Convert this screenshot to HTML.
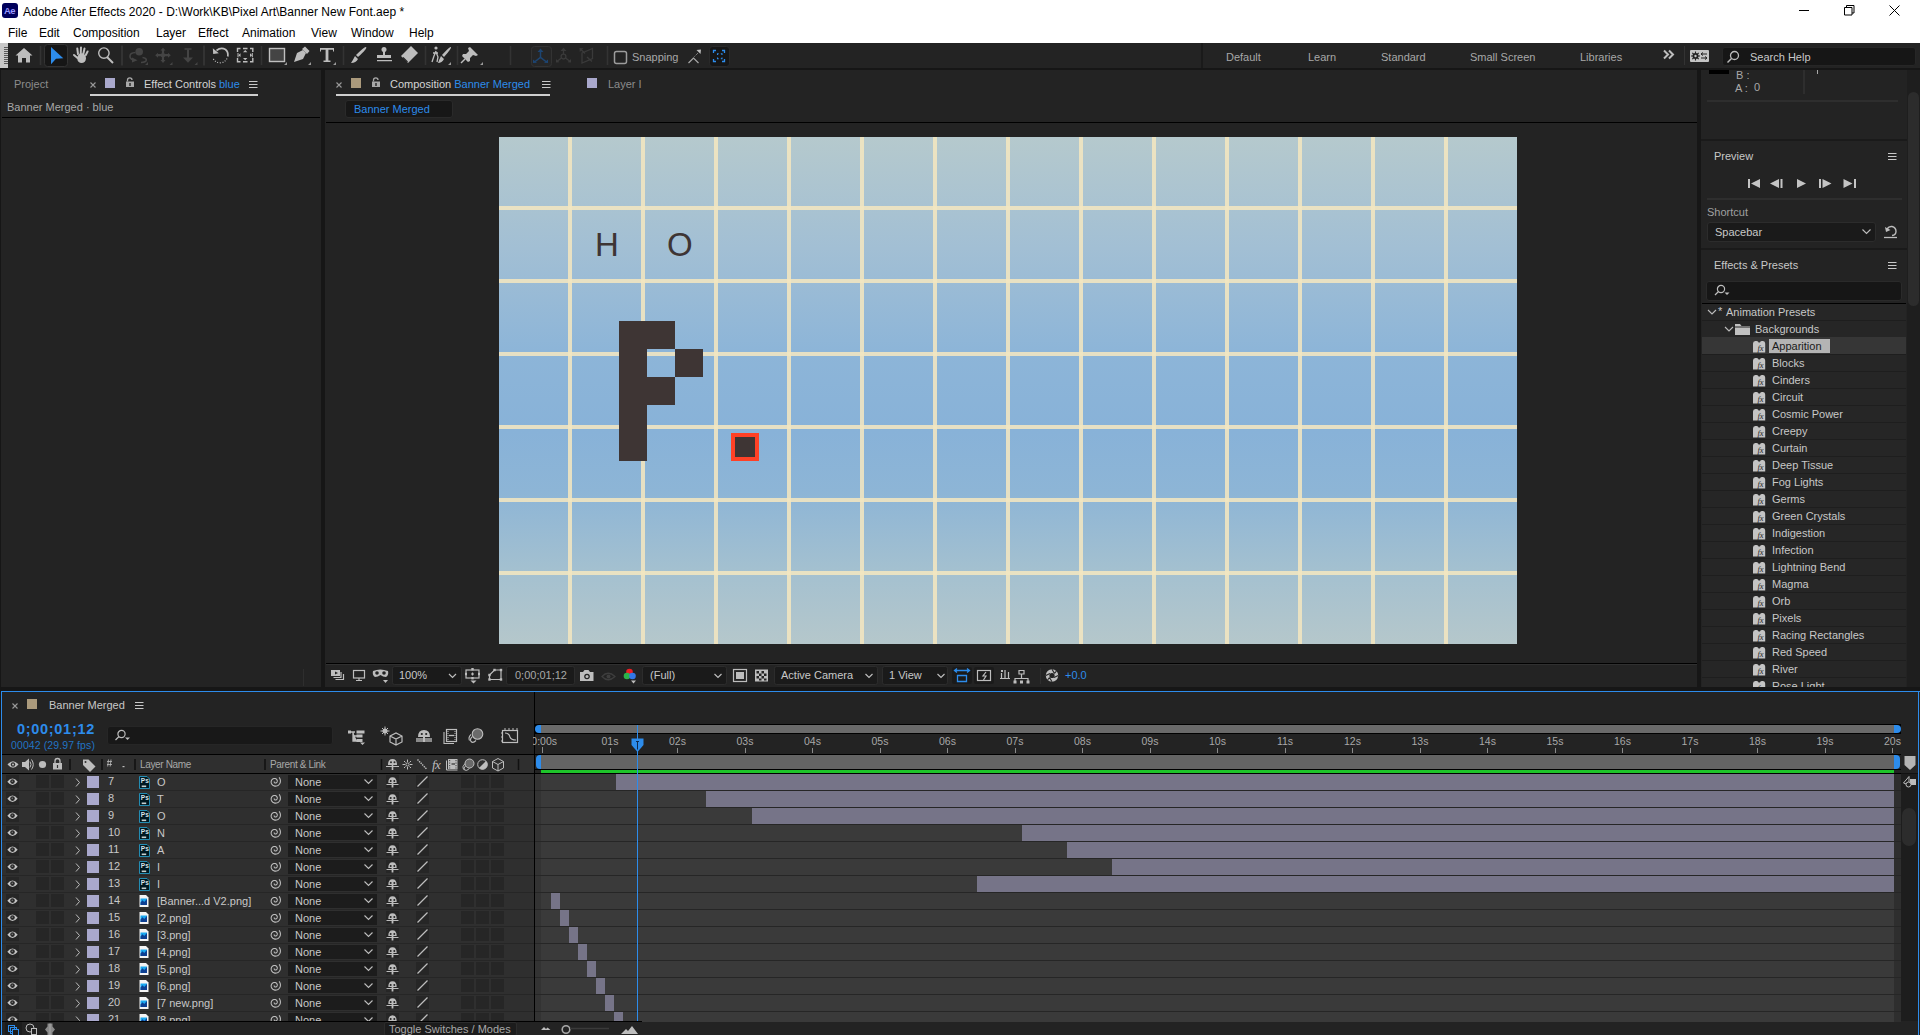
<!DOCTYPE html>
<html><head><meta charset="utf-8">
<style>
*{margin:0;padding:0;box-sizing:border-box}
html,body{width:1920px;height:1035px;overflow:hidden;background:#161616;font-family:"Liberation Sans",sans-serif;position:relative}
.a{position:absolute}
.t{position:absolute;white-space:nowrap;font-size:11px;line-height:14px}
.w{font-size:12px;color:#000}
.pn{position:absolute;background:#232323}
</style></head><body>
<!-- title + menu -->
<div class="a" style="left:0;top:0;width:1920px;height:43px;background:#fff"></div>
<div class="a" style="left:2px;top:3px;width:16px;height:15px;background:#00005b;border-radius:3px"></div>
<div class="t" style="left:4px;top:4px;font-size:9.5px;font-weight:bold;color:#9999ff;letter-spacing:-0.6px">Ae</div>
<div class="t w" style="left:23px;top:5px">Adobe After Effects 2020 - D:\Work\KB\Pixel Art\Banner New Font.aep *</div>
<div class="t w" style="left:8px;top:26px">File</div>
<div class="t w" style="left:39px;top:26px">Edit</div>
<div class="t w" style="left:73px;top:26px">Composition</div>
<div class="t w" style="left:156px;top:26px">Layer</div>
<div class="t w" style="left:198px;top:26px">Effect</div>
<div class="t w" style="left:242px;top:26px">Animation</div>
<div class="t w" style="left:311px;top:26px">View</div>
<div class="t w" style="left:351px;top:26px">Window</div>
<div class="t w" style="left:409px;top:26px">Help</div>

<!-- toolbar -->
<div class="a" style="left:0;top:43px;width:1920px;height:25px;background:#232323"></div>
<div class="a" style="left:0;top:68px;width:1920px;height:2px;background:#161616"></div>
<div class="a" style="left:0;top:43px;width:8px;height:25px;background:#c8c8c8"></div>
<svg class="a" style="left:4px;top:45px" width="4" height="21"><g stroke="#5a5a5a" stroke-width="1"><path d="M0 2.5h4M0 4.5h4M0 6.5h4M0 8.5h4M0 10.5h4M0 12.5h4M0 14.5h4M0 16.5h4M0 18.5h4"/></g></svg>
<svg class="a" style="left:0;top:43px" width="740" height="25" fill="none">
 <g fill="#bdbdbd">
  <path d="M24 5 L32.5 12.5 L30 12.5 L30 19.5 L26 19.5 L26 15 L22 15 L22 19.5 L18 19.5 L18 12.5 L15.5 12.5 Z"/>
 </g>
 <g stroke="#333" stroke-width="1.6"><path d="M40.5 3v19M261.5 3v19M343.5 3v19M425.5 3v19M457.5 3v19M510.5 3v19M607.5 3v19M1202.5 3v19M1684.5 3v19"/></g>
 <rect x="44.5" y="1.5" width="23" height="22" rx="3" fill="#161616" stroke="#333"/>
 <path d="M51 4 L63.3 15.3 L56 15.8 L51 21.3 Z" fill="#2d8ceb"/>
 <!-- hand -->
 <g stroke="#bdbdbd" stroke-width="2" stroke-linecap="round"><path d="M78 11 L77.3 5.5 M80.7 11 L81 4.5 M83.3 11 L84.5 5.5 M85.8 12 L87.6 8.5 M74 12 L77.5 15"/></g><ellipse cx="81.6" cy="15.2" rx="4.4" ry="4.9" fill="#bdbdbd"/>
 <!-- zoom -->
 <circle cx="103.9" cy="10.1" r="5.2" stroke="#bdbdbd" stroke-width="1.4"/>
 <path d="M107 14 L113 20" stroke="#bdbdbd" stroke-width="2"/>
 <!-- dim 3d tools -->
 <g fill="#444" stroke="#444">
  <circle cx="139.2" cy="8.8" r="3.8" stroke="none"/>
  <path d="M135.5 9.5 Q129.5 9.8 130 13.8 Q130.6 16.6 134.5 17" fill="none" stroke-width="1.6"/>
  <path d="M132 14.5 L137.5 17.3 L132 19.5z" stroke="none"/>
  <path d="M142.5 14.5 Q146.5 15 146.3 17.2 Q146 19.3 141 19.5" fill="none" stroke-width="1.6"/>
  <path d="M163 6.5 V18.5 M157 12.2 H169" fill="none" stroke-width="2.2"/>
  <path d="M160.5 7.5 L163 4.8 L165.5 7.5z M160.5 17 L163 20 L165.5 17z M158 9.7 L155.2 12.2 L158 14.7z M168 9.7 L170.8 12.2 L168 14.7z" stroke="none"/>
  <circle cx="163" cy="12.2" r="2.2" stroke="none"/>
  <path d="M188 6.5 V15" fill="none" stroke-width="2"/>
  <path d="M184.5 6 H191.5" fill="none" stroke-width="1.5"/>
  <path d="M183 14.5 H193 L188 19.8z" stroke="none"/>
 </g>
 <g fill="#444"><path d="M148 22h-3l3-3z M172.5 22h-3l3-3z M197.5 22h-3l3-3z"/></g>
 <g stroke="#333" stroke-width="2"><path d="M122 2.5v20M204 2.5v20"/></g>
 <!-- rotate -->
 <path d="M216.5 7.5 Q221 3.8 225.5 6.5 Q228.5 8.8 227.8 13.5" stroke="#bdbdbd" stroke-width="1.7" fill="none"/>
 <path d="M212.8 5.2 L213.2 11 L218.8 10.3z" fill="#bdbdbd"/>
 <path d="M227 15.5 Q225 19.5 220.5 19.8 Q215.5 19.8 213.3 15.8" stroke="#bdbdbd" stroke-width="1.2" stroke-dasharray="1 1.6" fill="none"/>
 <!-- anchor -->
 <g stroke="#bdbdbd" stroke-width="1.4" fill="none"><path d="M237.5 9 V5.5 H240.5 M243 5.5 H247.5 M250 5.5 H252.8 V9 M252.8 15 V18.7 H250 M247.5 18.7 H243 M240.5 18.7 H237.5 V15"/></g>
 <path d="M243 9.3 L245.2 7 L247.4 9.3z M243 15 L245.2 17.3 L247.4 15z M240.5 10.3 L238.3 12.2 L240.5 14.1z M250 10.3 L252.2 12.2 L250 14.1z" fill="#bdbdbd"/>
 <path d="M238 10v4.3M252.3 10v4.3" stroke="#bdbdbd" stroke-width="1"/>
 <!-- rect -->
 <rect x="269.5" y="5.5" width="15" height="13" fill="#444" stroke="#c0c0c0" stroke-width="1.4"/>
 <g fill="#9a9a9a"><path d="M287 22h-3l3-3z M311 22h-3l3-3z M336 22h-3l3-3z M451 22h-3l3-3z M483 22h-3l3-3z"/></g>
 <!-- pen -->
 <path d="M294 19 L297 10 L303 7 L306 10 L303 16 Z" fill="#bdbdbd"/>
 <path d="M302 6 L305 3.5 L309.5 8 L307 11 Z" fill="#bdbdbd"/>
 <!-- T -->
 <path d="M320 5 H334 V8.5 H333 V6.8 H328.4 V17.5 H330.5 V19 H323.5 V17.5 H325.6 V6.8 H321 V8.5 H320 Z" fill="#bdbdbd"/>
 <!-- brush -->
 <path d="M366 4 Q368 5 358 14 L356 12 Q365 3 366 4 Z M355 13 L358 16 Q356 20 351 20 Q353 17 355 13 Z" fill="#bdbdbd"/>
 <!-- stamp -->
 <circle cx="384" cy="6.5" r="2.5" fill="#bdbdbd"/>
 <path d="M383 8 h2 v4 h6 v3 h-14 v-3 h6 Z M377 17 h15 v1.3 h-15 Z" fill="#bdbdbd"/>
 <!-- eraser -->
 <path d="M411 3 L418 10 L408 20 L401 13 Z" fill="#bdbdbd"/>
 <path d="M403 14.5 L407.5 19" stroke="#232323" stroke-width="1.3"/>
 <!-- roto -->
 <circle cx="436" cy="5" r="1.6" fill="#bdbdbd"/>
 <path d="M436 8 L434 13 L432 19 M436 9 L438 14 L437 19 M433 10 L438 10" stroke="#bdbdbd" stroke-width="1.3"/>
 <path d="M451 4 Q452 5 444 14 L442 12 Q450 3 451 4 Z M441 13 L444 16 Q442 20 438 20 Q439 17 441 13 Z" fill="#bdbdbd"/>
 <!-- pin -->
 <path d="M470 4 L478 12 L476 13 L473 12 L470 15 L470 18 L468 19 L462 13 L463 11 L466 11 L469 8 L468 5 Z" fill="#bdbdbd"/>
 <path d="M465 16 L461 20" stroke="#bdbdbd" stroke-width="1.5"/>
 <!-- 3d axes dim -->
 <rect x="531.5" y="3.5" width="20" height="20" rx="3" fill="#262626" stroke="#333"/>
 <g stroke="#1d4572" stroke-width="1.5" fill="none"><path d="M540.5 8 V14.4 L534.5 19 M540.5 14.4 L546.5 19"/></g>
 <g fill="#1d4572"><path d="M537.5 9 L540.5 5.5 L543.5 9z M533 16.5 L533 20 L537 19.8z M548 16.5 L548 20 L544 19.8z"/></g>
 <g stroke="#3a3a3a" stroke-width="1.3" fill="none"><circle cx="563.5" cy="13.6" r="2.4"/><path d="M563.5 7 V11.2 M561.4 15 L557 18.5 M565.6 15 L570 18.5"/>
 <path d="M582 10 L592.5 5.5 V15.5 L582 20z M580.5 6 L585 10.5 M587 14 L592 18.5"/></g>
 <g fill="#3a3a3a"><path d="M560.5 8 L563.5 4.8 L566.5 8z M556 16 L556 19.5 L559.5 19.3z M571 16 L571 19.5 L567.5 19.3z M579.5 5 L583.5 5.3 L579.8 9z"/></g>
 <!-- checkbox -->
 <rect x="614.5" y="8.5" width="12" height="12" rx="2" stroke="#9c9c9c" stroke-width="1.5"/>
 <!-- snap arrow -->
 <path d="M688.5 20 L693.5 15 L698.5 20" stroke="#a8a8a8" stroke-width="1.2"/>
 <path d="M694.5 13.5 L698 10" stroke="#a8a8a8" stroke-width="1" stroke-dasharray="1 1"/>
 <path d="M696.5 7 L701 6.5 L700.5 11z" fill="#bdbdbd"/>
 <!-- snap selected -->
 <rect x="709.5" y="3.5" width="20" height="20" rx="3" fill="#161616" stroke="#2a2a2a"/>
 <g stroke="#2d8ceb" stroke-width="1.3"><path d="M713.5 10 V7.5 H716 M722 7.5 H724.5 V10 M724.5 16 V18.5 H722 M716 18.5 H713.5 V16"/></g>
 <g stroke="#2d8ceb" stroke-width="1.1"><path d="M717.5 12 V10.8 H718.7 M720.8 10.8 H722 V12 M722 14.5 V15.7 H720.8 M718.7 15.7 H717.5 V14.5"/></g>
</svg>
<div class="t" style="left:632px;top:50px;color:#a8a8a8">Snapping</div>
<!-- workspaces -->
<div class="a" style="left:1201px;top:43px;width:2px;height:25px;background:#1a1a1a"></div>
<div class="a" style="left:1684px;top:46px;width:1px;height:19px;background:#333"></div>
<div class="t" style="left:1226px;top:50px;color:#a8a8a8">Default</div>
<div class="t" style="left:1308px;top:50px;color:#a8a8a8">Learn</div>
<div class="t" style="left:1381px;top:50px;color:#a8a8a8">Standard</div>
<div class="t" style="left:1470px;top:50px;color:#a8a8a8">Small Screen</div>
<div class="t" style="left:1580px;top:50px;color:#a8a8a8">Libraries</div>
<svg class="a" style="left:1660px;top:48px" width="20" height="14"><path d="M4 2.5 L8 6.5 L4 10.5 M9 2.5 L13 6.5 L9 10.5" stroke="#bdbdbd" stroke-width="2" fill="none"/></svg>
<svg class="a" style="left:1689px;top:50px" width="22" height="13"><rect x="1" y="0" width="19" height="12" rx="1" fill="#c4c4c4"/><circle cx="6.5" cy="6" r="3" fill="#232323"/><path d="M6.5 1.5v9M2 6h9M3.3 2.8l6.4 6.4M9.7 2.8l-6.4 6.4" stroke="#232323" stroke-width="1.1"/><circle cx="6.5" cy="6" r="1.2" fill="#c4c4c4"/><path d="M12 4h6M14 2.5l-2 1.5 2 1.5M12 8h6M16 6.5l2 1.5-2 1.5" stroke="#232323" stroke-width="1" fill="none"/></svg>
<div class="a" style="left:1722px;top:47px;width:194px;height:19px;background:#161616;border:1px solid #262626;border-radius:3px"></div>
<svg class="a" style="left:1726px;top:50px" width="14" height="14"><circle cx="8.5" cy="5.5" r="4" stroke="#bdbdbd" stroke-width="1.3" fill="none"/><path d="M5.5 8.5 L1.5 12.5" stroke="#bdbdbd" stroke-width="1.5"/></svg>
<div class="t" style="left:1750px;top:50px;color:#c8c8c8">Search Help</div>
<!-- window controls -->
<svg class="a" style="left:1790px;top:0" width="130" height="22" fill="none" stroke="#000" stroke-width="1"><path d="M9 10.5h10"/><path d="M54.5 7.5h7.5v7.5h-7.5z M56.5 7.5v-2h7.5v7.5h-2"/><path d="M99.5 5.5l10 10M109.5 5.5l-10 10"/></svg>



<!-- left panel -->
<div class="pn" style="left:1px;top:70px;width:320px;height:617px"></div>
<!-- comp panel -->
<div class="pn" style="left:325px;top:70px;width:1372px;height:617px"></div>
<!-- left panel content -->
<div class="t" style="left:14px;top:77px;color:#8c8c8c">Project</div>
<svg class="a" style="left:89px;top:81px" width="8" height="8"><path d="M1.5 1.5l5 5M6.5 1.5l-5 5" stroke="#9a9a9a" stroke-width="1.1"/></svg>
<div class="a" style="left:105px;top:78px;width:10px;height:10px;background:#a9a8cc"></div>
<svg class="a" style="left:125px;top:77px" width="10" height="11"><path d="M2.5 4.5 V3 Q2.5 0.8 4.8 0.8 Q7 0.8 7 3" stroke="#a8a8a8" stroke-width="1.3" fill="none"/><rect x="1" y="4.5" width="8" height="5.5" fill="#a8a8a8"/><rect x="4.3" y="6" width="1.4" height="3" fill="#232323"/></svg>
<div class="t" style="left:144px;top:77px;color:#d4d4d4">Effect Controls <span style="color:#2d8ceb">blue</span></div>
<svg class="a" style="left:249px;top:80px" width="9" height="9"><path d="M0 1.5h8.5M0 4.5h8.5M0 7.5h8.5" stroke="#c8c8c8" stroke-width="1.2"/></svg>
<div class="a" style="left:90px;top:94px;width:168px;height:2px;background:#cfcfcf"></div>
<div class="t" style="left:7px;top:100px;color:#a8a8a8">Banner Merged · blue</div>
<div class="a" style="left:2px;top:117px;width:318px;height:1px;background:#000"></div>
<div class="a" style="left:303px;top:669px;width:1px;height:17px;background:#2e2e2e"></div>

<!-- comp panel header -->
<svg class="a" style="left:335px;top:81px" width="8" height="8"><path d="M1.5 1.5l5 5M6.5 1.5l-5 5" stroke="#9a9a9a" stroke-width="1.1"/></svg>
<div class="a" style="left:351px;top:78px;width:10px;height:10px;background:#ab9a7c"></div>
<svg class="a" style="left:371px;top:77px" width="10" height="11"><path d="M2.5 4.5 V3 Q2.5 0.8 4.8 0.8 Q7 0.8 7 3" stroke="#a8a8a8" stroke-width="1.3" fill="none"/><rect x="1" y="4.5" width="8" height="5.5" fill="#a8a8a8"/><rect x="4.3" y="6" width="1.4" height="3" fill="#232323"/></svg>
<div class="t" style="left:390px;top:77px;color:#d4d4d4">Composition <span style="color:#2d8ceb">Banner Merged</span></div>
<svg class="a" style="left:542px;top:80px" width="9" height="9"><path d="M0 1.5h8.5M0 4.5h8.5M0 7.5h8.5" stroke="#c8c8c8" stroke-width="1.2"/></svg>
<div class="a" style="left:336px;top:94px;width:214px;height:2px;background:#cfcfcf"></div>
<div class="a" style="left:587px;top:78px;width:10px;height:10px;background:#a9a8cc"></div>
<div class="t" style="left:608px;top:77px;color:#8c8c8c">Layer I</div>
<div class="a" style="left:345px;top:100px;width:108px;height:18px;background:#171717;border:1px solid #2a2a2a;border-radius:3px"></div>
<div class="t" style="left:354px;top:102px;color:#2d8ceb">Banner Merged</div>
<div class="a" style="left:326px;top:122px;width:1371px;height:1px;background:#000"></div>

<!-- comp bottom toolbar -->
<div class="a" style="left:326px;top:663px;width:1371px;height:1px;background:#000"></div>
<div class="a" style="left:326px;top:664px;width:1371px;height:1px;background:#303030"></div>
<svg class="a" style="left:325px;top:665px" width="780" height="22" fill="none">
 <g fill="#bdbdbd" stroke="#bdbdbd">
  <rect x="6" y="5" width="9" height="6" stroke="none"/>
  <path d="M10 6.5 L13 8 L10 9.5Z" fill="#232323" stroke="none"/>
  <path d="M16 7 V12.5 H8.5 M18.5 9 V14.5 H10.5" stroke-width="1.2" fill="none"/>
  <rect x="28.5" y="5.5" width="11" height="7.5" fill="none" stroke-width="1.2"/>
  <path d="M31 15.5 h6 M34 13 v2.5" stroke-width="1.2"/>
  <path d="M48 6 Q55 3 63 6 Q64 10 61 12 Q58 12 55.5 10 Q53 12 50 12 Q47 10 48 6Z" stroke="none"/>
  <circle cx="52" cy="8" r="1.8" fill="#232323" stroke="none"/><circle cx="59" cy="8" r="1.8" fill="#232323" stroke="none"/>
  <path d="M58 15 h5 l-2.5 3z" stroke="none"/>
 </g>
 <rect x="67.5" y="1.5" width="69" height="18" rx="2" fill="#1a1a1a" stroke="#2c2c2c"/>
 <path d="M124 9 l3.5 3.5 l3.5 -3.5" stroke="#bdbdbd" stroke-width="1.2"/>
 <g stroke="#bdbdbd" stroke-width="1.2">
  <rect x="141" y="5" width="13" height="8"/>
  <path d="M147.5 7.5 v3 M146 9 h3"/>
  <path d="M164.5 14.5 V10 L169.5 5 H176 V14.5z"/>
 </g>
 <g fill="#bdbdbd"><rect x="146.3" y="3" width="2.4" height="2.4"/><rect x="146.3" y="12" width="2.4" height="2.4"/><rect x="140" y="7.8" width="2" height="2.4"/><rect x="153" y="7.8" width="2" height="2.4"/>
 <rect x="163.3" y="13.3" width="2.4" height="2.4"/><rect x="163.3" y="8.8" width="2.4" height="2.4"/><rect x="168.3" y="3.8" width="2.4" height="2.4"/><rect x="174.8" y="3.8" width="2.4" height="2.4"/><rect x="174.8" y="13.3" width="2.4" height="2.4"/></g>
 <path d="M145.5 15.5 h6 l-3 3z" fill="#bdbdbd"/>
 <rect x="181.5" y="1.5" width="68" height="18" rx="2" fill="#1a1a1a" stroke="#2c2c2c"/>
 <path d="M255 7 h3 l1.5 -2 h4 l1.5 2 h3.5 v9 h-13.5z" fill="#bdbdbd"/>
 <circle cx="262" cy="11.5" r="2.8" fill="#232323"/><circle cx="262" cy="11.5" r="1.5" fill="#bdbdbd"/>
 <g stroke="#3e3e3e" stroke-width="1.3"><path d="M277 11.5 Q283 5 290 11.5 Q283 18 277 11.5Z"/></g>
 <circle cx="283.5" cy="11.5" r="2" fill="#3e3e3e"/>
 <circle cx="304.5" cy="7" r="3.3" fill="#ee1d24"/>
 <circle cx="302" cy="11" r="3.3" fill="#2db24a"/>
 <circle cx="307.5" cy="11" r="3.3" fill="#3277e6"/>
 <path d="M306 15.5 h5 l-2.5 3z" fill="#bdbdbd"/>
 <rect x="317.5" y="1.5" width="84" height="18" rx="2" fill="#1a1a1a" stroke="#2c2c2c"/>
 <path d="M389.5 9 l3.5 3.5 l3.5 -3.5" stroke="#bdbdbd" stroke-width="1.2"/>
 <g stroke="#bdbdbd" stroke-width="1.2">
  <rect x="408.5" y="4.5" width="13" height="12"/>
 </g>
 <rect x="411" y="7" width="8" height="7" fill="#bdbdbd"/>
 <rect x="430" y="4.5" width="13" height="12" fill="#bdbdbd"/>
 <g fill="#232323"><rect x="431.5" y="6" width="2.5" height="2.5"/><rect x="436.5" y="6" width="2.5" height="2.5"/><rect x="434" y="8.5" width="2.5" height="2.5"/><rect x="439" y="8.5" width="2.5" height="2.5"/><rect x="431.5" y="11" width="2.5" height="2.5"/><rect x="436.5" y="11" width="2.5" height="2.5"/><rect x="434" y="13.5" width="2.5" height="2"/><rect x="439" y="13.5" width="2.5" height="2"/></g>
 <rect x="449.5" y="1.5" width="103" height="18" rx="2" fill="#1a1a1a" stroke="#2c2c2c"/>
 <path d="M540.5 9 l3.5 3.5 l3.5 -3.5" stroke="#bdbdbd" stroke-width="1.2"/>
 <rect x="557.5" y="1.5" width="65" height="18" rx="2" fill="#1a1a1a" stroke="#2c2c2c"/>
 <path d="M612.5 9 l3.5 3.5 l3.5 -3.5" stroke="#bdbdbd" stroke-width="1.2"/>
 <rect x="627" y="2" width="20" height="17" rx="2" fill="#1a1a1a"/>
 <rect x="649" y="2" width="20" height="17" rx="2" fill="#1a1a1a"/>
 <g stroke="#2d8ceb" stroke-width="1.3" fill="none"><path d="M629.5 5.5 h15 M632 3.5 l-2.5 2 l2.5 2 M642 3.5 l2.5 2 l-2.5 2 M632.5 10.5 h9 v6 h-9z"/></g>
 <g stroke="#bdbdbd" stroke-width="1.2" fill="none">
  <rect x="652.5" y="5.5" width="13" height="10"/>
  <path d="M661 7 l-3 4 h3 l-2.5 4"/>
  <path d="M676.5 8 v5 M680 5 v8 M683.5 7 v6 M675 13.5 h10"/>
  <path d="M694 5.5 h5 v3.5 h-5z M690 17 v-3.5 h13 v3.5 M696.5 9 v4.5"/>
 </g>
 <path d="M676 5h2v2h-2z M688.5 15.5h3v3h-3z M695 15.5h3v3h-3z M701.5 15.5h3v3h-3z" fill="#bdbdbd"/>
 <path d="M715.5 3v16" stroke="#2e2e2e"/>
 <circle cx="727" cy="10.5" r="6.2" fill="#bdbdbd"/>
 <circle cx="727" cy="10.5" r="2.6" fill="#232323"/>
 <g stroke="#232323" stroke-width="1.1"><path d="M727 4.3 L729.5 8.5 M733.2 10.5 L729 12.5 M727 16.7 L724.5 12.5 M720.8 10.5 L725 8.5 M731.4 6 L729.5 8.5 M722.6 15 L724.5 12.5"/></g>
</svg>
<div class="t" style="left:399px;top:668px;color:#c8c8c8">100%</div>
<div class="t" style="left:515px;top:668px;color:#a8a8a8">0;00;01;12</div>
<div class="t" style="left:650px;top:668px;color:#c8c8c8">(Full)</div>
<div class="t" style="left:781px;top:668px;color:#c8c8c8">Active Camera</div>
<div class="t" style="left:889px;top:668px;color:#c8c8c8">1 View</div>
<div class="t" style="left:1065px;top:668px;color:#2d8ceb">+0.0</div>

<!-- right panel -->
<div class="pn" style="left:1701px;top:70px;width:219px;height:617px"></div>
<div class="a" style="left:1709px;top:70px;width:20px;height:4px;background:#000"></div>
<div class="t" style="left:1736px;top:68px;color:#a8a8a8">B :</div>
<div class="t" style="left:1735px;top:81px;color:#a8a8a8">A :</div>
<div class="t" style="left:1754px;top:80px;color:#a8a8a8">0</div>
<div class="a" style="left:1803px;top:70px;width:2px;height:24px;background:#2e2e2e"></div>
<div class="a" style="left:1817px;top:70px;width:1px;height:4px;background:#a8a8a8"></div>
<div class="a" style="left:1707px;top:100px;width:191px;height:2px;background:#2e2e2e"></div>
<div class="a" style="left:1701px;top:139px;width:206px;height:2px;background:#1a1a1a"></div>
<div class="a" style="left:1907px;top:70px;width:13px;height:617px;background:#1e1e1e"></div>
<div class="a" style="left:1908px;top:92px;width:11px;height:214px;background:#2c2c2c;border-radius:6px"></div>
<div class="t" style="left:1714px;top:149px;color:#c8c8c8">Preview</div>
<svg class="a" style="left:1888px;top:152px" width="9" height="9"><path d="M0 1.5h8.5M0 4.5h8.5M0 7.5h8.5" stroke="#c8c8c8" stroke-width="1.2"/></svg>
<svg class="a" style="left:1745px;top:176px" width="115" height="14" fill="#c4c4c4">
<rect x="3" y="3" width="2" height="9"/><path d="M15 3v9l-9-4.5z"/>
<path d="M34 3v9l-9-4.5z"/><rect x="35.5" y="3" width="2" height="9"/>
<path d="M52 3v9l9-4.5z"/>
<rect x="74" y="3" width="2" height="9"/><path d="M77.5 3v9l9-4.5z"/>
<path d="M98.5 3v9l9-4.5z"/><rect x="109" y="3" width="2" height="9"/>
</svg>
<div class="a" style="left:1707px;top:198px;width:195px;height:2px;background:#2e2e2e"></div>
<div class="t" style="left:1707px;top:205px;color:#a0a0a0">Shortcut</div>
<div class="a" style="left:1707px;top:222px;width:169px;height:20px;background:#1a1a1a;border:1px solid #2c2c2c;border-radius:3px"></div>
<div class="t" style="left:1715px;top:225px;color:#c8c8c8">Spacebar</div>
<svg class="a" style="left:1862px;top:229px" width="10" height="6"><path d="M.5 .5l4 4 4-4" stroke="#bdbdbd" stroke-width="1.1" fill="none"/></svg>
<svg class="a" style="left:1883px;top:224px" width="15" height="15"><path d="M4 5 Q6 2 9 2.5 Q13 3.5 13 7.5 Q13 11 9 11.5" stroke="#bdbdbd" stroke-width="1.4" fill="none"/><path d="M2 3 L3 8 L7.5 6z" fill="#bdbdbd"/><path d="M1 13.5h13" stroke="#bdbdbd" stroke-width="1.3"/></svg>
<div class="a" style="left:1701px;top:248px;width:206px;height:2px;background:#1a1a1a"></div>
<div class="t" style="left:1714px;top:258px;color:#c8c8c8">Effects &amp; Presets</div>
<svg class="a" style="left:1888px;top:261px" width="9" height="9"><path d="M0 1.5h8.5M0 4.5h8.5M0 7.5h8.5" stroke="#c8c8c8" stroke-width="1.2"/></svg>
<div class="a" style="left:1706px;top:281px;width:196px;height:20px;background:#161616;border:1px solid #2a2a2a;border-radius:3px"></div>
<svg class="a" style="left:1713px;top:284px" width="18" height="13"><circle cx="8" cy="5" r="3.6" stroke="#bdbdbd" stroke-width="1.2" fill="none"/><path d="M5.5 7.5 L2 11" stroke="#bdbdbd" stroke-width="1.3"/><path d="M11.5 8.5h5l-2.5 2.5z" fill="#bdbdbd"/></svg>
<div class="a" style="left:1702px;top:303px;width:204px;height:1px;background:#000"></div>
<div class="a" style="left:1702px;top:304px;width:204px;height:383px;background:#262626"></div>
<div class="a" style="left:1702px;top:320px;width:204px;height:1px;background:#1e1e1e"></div>
<div class="a" style="left:1702px;top:337px;width:204px;height:1px;background:#1e1e1e"></div>
<div class="a" style="left:1702px;top:354px;width:204px;height:1px;background:#1e1e1e"></div>
<div class="a" style="left:1702px;top:371px;width:204px;height:1px;background:#1e1e1e"></div>
<div class="a" style="left:1702px;top:388px;width:204px;height:1px;background:#1e1e1e"></div>
<div class="a" style="left:1702px;top:405px;width:204px;height:1px;background:#1e1e1e"></div>
<div class="a" style="left:1702px;top:422px;width:204px;height:1px;background:#1e1e1e"></div>
<div class="a" style="left:1702px;top:439px;width:204px;height:1px;background:#1e1e1e"></div>
<div class="a" style="left:1702px;top:456px;width:204px;height:1px;background:#1e1e1e"></div>
<div class="a" style="left:1702px;top:473px;width:204px;height:1px;background:#1e1e1e"></div>
<div class="a" style="left:1702px;top:490px;width:204px;height:1px;background:#1e1e1e"></div>
<div class="a" style="left:1702px;top:507px;width:204px;height:1px;background:#1e1e1e"></div>
<div class="a" style="left:1702px;top:524px;width:204px;height:1px;background:#1e1e1e"></div>
<div class="a" style="left:1702px;top:541px;width:204px;height:1px;background:#1e1e1e"></div>
<div class="a" style="left:1702px;top:558px;width:204px;height:1px;background:#1e1e1e"></div>
<div class="a" style="left:1702px;top:575px;width:204px;height:1px;background:#1e1e1e"></div>
<div class="a" style="left:1702px;top:592px;width:204px;height:1px;background:#1e1e1e"></div>
<div class="a" style="left:1702px;top:609px;width:204px;height:1px;background:#1e1e1e"></div>
<div class="a" style="left:1702px;top:626px;width:204px;height:1px;background:#1e1e1e"></div>
<div class="a" style="left:1702px;top:643px;width:204px;height:1px;background:#1e1e1e"></div>
<div class="a" style="left:1702px;top:660px;width:204px;height:1px;background:#1e1e1e"></div>
<div class="a" style="left:1702px;top:677px;width:204px;height:1px;background:#1e1e1e"></div>
<svg class="a" style="left:1707px;top:308px" width="10" height="8"><path d="M1 2l4 4 4-4" stroke="#bdbdbd" stroke-width="1.1" fill="none"/></svg>
<div class="t" style="left:1718px;top:304px;color:#c8c8c8">*</div>
<div class="t" style="left:1726px;top:305px;color:#c8c8c8">Animation Presets</div>
<svg class="a" style="left:1724px;top:325px" width="10" height="8"><path d="M1 2l4 4 4-4" stroke="#bdbdbd" stroke-width="1.1" fill="none"/></svg>
<svg class="a" style="left:1735px;top:323px" width="15" height="12"><path d="M0 1h5l1.5 2H15v9H0z" fill="#c0c0c0"/><path d="M0 4h15" stroke="#262626" stroke-width="1"/></svg>
<div class="t" style="left:1755px;top:322px;color:#c8c8c8">Backgrounds</div>
<div class="a" style="left:1702px;top:337px;width:204px;height:17px;background:#363636"></div>
<div class="a" style="left:1769px;top:339px;width:61px;height:14px;background:#b4b4b4"></div>
<svg class="a" style="left:1753px;top:341px" width="13" height="12"><path d="M0 11.5 V2.5 Q0 0 2.3 0 H3.6 Q5.5 0 5.5 1.6 H7 Q7 0 8.8 0 H10 Q12.2 0 12.2 2.5 V11.5z" fill="#c4c4c4"/><text x="4.5" y="10.3" font-family="Liberation Serif" font-style="italic" font-size="8.5" fill="#1e1e1e">fx</text></svg>
<div class="t" style="left:1772px;top:339px;color:#1a1a1a">Apparition</div>
<svg class="a" style="left:1753px;top:358px" width="13" height="12"><path d="M0 11.5 V2.5 Q0 0 2.3 0 H3.6 Q5.5 0 5.5 1.6 H7 Q7 0 8.8 0 H10 Q12.2 0 12.2 2.5 V11.5z" fill="#c4c4c4"/><text x="4.5" y="10.3" font-family="Liberation Serif" font-style="italic" font-size="8.5" fill="#1e1e1e">fx</text></svg>
<div class="t" style="left:1772px;top:356px;color:#c8c8c8">Blocks</div>
<svg class="a" style="left:1753px;top:375px" width="13" height="12"><path d="M0 11.5 V2.5 Q0 0 2.3 0 H3.6 Q5.5 0 5.5 1.6 H7 Q7 0 8.8 0 H10 Q12.2 0 12.2 2.5 V11.5z" fill="#c4c4c4"/><text x="4.5" y="10.3" font-family="Liberation Serif" font-style="italic" font-size="8.5" fill="#1e1e1e">fx</text></svg>
<div class="t" style="left:1772px;top:373px;color:#c8c8c8">Cinders</div>
<svg class="a" style="left:1753px;top:392px" width="13" height="12"><path d="M0 11.5 V2.5 Q0 0 2.3 0 H3.6 Q5.5 0 5.5 1.6 H7 Q7 0 8.8 0 H10 Q12.2 0 12.2 2.5 V11.5z" fill="#c4c4c4"/><text x="4.5" y="10.3" font-family="Liberation Serif" font-style="italic" font-size="8.5" fill="#1e1e1e">fx</text></svg>
<div class="t" style="left:1772px;top:390px;color:#c8c8c8">Circuit</div>
<svg class="a" style="left:1753px;top:409px" width="13" height="12"><path d="M0 11.5 V2.5 Q0 0 2.3 0 H3.6 Q5.5 0 5.5 1.6 H7 Q7 0 8.8 0 H10 Q12.2 0 12.2 2.5 V11.5z" fill="#c4c4c4"/><text x="4.5" y="10.3" font-family="Liberation Serif" font-style="italic" font-size="8.5" fill="#1e1e1e">fx</text></svg>
<div class="t" style="left:1772px;top:407px;color:#c8c8c8">Cosmic Power</div>
<svg class="a" style="left:1753px;top:426px" width="13" height="12"><path d="M0 11.5 V2.5 Q0 0 2.3 0 H3.6 Q5.5 0 5.5 1.6 H7 Q7 0 8.8 0 H10 Q12.2 0 12.2 2.5 V11.5z" fill="#c4c4c4"/><text x="4.5" y="10.3" font-family="Liberation Serif" font-style="italic" font-size="8.5" fill="#1e1e1e">fx</text></svg>
<div class="t" style="left:1772px;top:424px;color:#c8c8c8">Creepy</div>
<svg class="a" style="left:1753px;top:443px" width="13" height="12"><path d="M0 11.5 V2.5 Q0 0 2.3 0 H3.6 Q5.5 0 5.5 1.6 H7 Q7 0 8.8 0 H10 Q12.2 0 12.2 2.5 V11.5z" fill="#c4c4c4"/><text x="4.5" y="10.3" font-family="Liberation Serif" font-style="italic" font-size="8.5" fill="#1e1e1e">fx</text></svg>
<div class="t" style="left:1772px;top:441px;color:#c8c8c8">Curtain</div>
<svg class="a" style="left:1753px;top:460px" width="13" height="12"><path d="M0 11.5 V2.5 Q0 0 2.3 0 H3.6 Q5.5 0 5.5 1.6 H7 Q7 0 8.8 0 H10 Q12.2 0 12.2 2.5 V11.5z" fill="#c4c4c4"/><text x="4.5" y="10.3" font-family="Liberation Serif" font-style="italic" font-size="8.5" fill="#1e1e1e">fx</text></svg>
<div class="t" style="left:1772px;top:458px;color:#c8c8c8">Deep Tissue</div>
<svg class="a" style="left:1753px;top:477px" width="13" height="12"><path d="M0 11.5 V2.5 Q0 0 2.3 0 H3.6 Q5.5 0 5.5 1.6 H7 Q7 0 8.8 0 H10 Q12.2 0 12.2 2.5 V11.5z" fill="#c4c4c4"/><text x="4.5" y="10.3" font-family="Liberation Serif" font-style="italic" font-size="8.5" fill="#1e1e1e">fx</text></svg>
<div class="t" style="left:1772px;top:475px;color:#c8c8c8">Fog Lights</div>
<svg class="a" style="left:1753px;top:494px" width="13" height="12"><path d="M0 11.5 V2.5 Q0 0 2.3 0 H3.6 Q5.5 0 5.5 1.6 H7 Q7 0 8.8 0 H10 Q12.2 0 12.2 2.5 V11.5z" fill="#c4c4c4"/><text x="4.5" y="10.3" font-family="Liberation Serif" font-style="italic" font-size="8.5" fill="#1e1e1e">fx</text></svg>
<div class="t" style="left:1772px;top:492px;color:#c8c8c8">Germs</div>
<svg class="a" style="left:1753px;top:511px" width="13" height="12"><path d="M0 11.5 V2.5 Q0 0 2.3 0 H3.6 Q5.5 0 5.5 1.6 H7 Q7 0 8.8 0 H10 Q12.2 0 12.2 2.5 V11.5z" fill="#c4c4c4"/><text x="4.5" y="10.3" font-family="Liberation Serif" font-style="italic" font-size="8.5" fill="#1e1e1e">fx</text></svg>
<div class="t" style="left:1772px;top:509px;color:#c8c8c8">Green Crystals</div>
<svg class="a" style="left:1753px;top:528px" width="13" height="12"><path d="M0 11.5 V2.5 Q0 0 2.3 0 H3.6 Q5.5 0 5.5 1.6 H7 Q7 0 8.8 0 H10 Q12.2 0 12.2 2.5 V11.5z" fill="#c4c4c4"/><text x="4.5" y="10.3" font-family="Liberation Serif" font-style="italic" font-size="8.5" fill="#1e1e1e">fx</text></svg>
<div class="t" style="left:1772px;top:526px;color:#c8c8c8">Indigestion</div>
<svg class="a" style="left:1753px;top:545px" width="13" height="12"><path d="M0 11.5 V2.5 Q0 0 2.3 0 H3.6 Q5.5 0 5.5 1.6 H7 Q7 0 8.8 0 H10 Q12.2 0 12.2 2.5 V11.5z" fill="#c4c4c4"/><text x="4.5" y="10.3" font-family="Liberation Serif" font-style="italic" font-size="8.5" fill="#1e1e1e">fx</text></svg>
<div class="t" style="left:1772px;top:543px;color:#c8c8c8">Infection</div>
<svg class="a" style="left:1753px;top:562px" width="13" height="12"><path d="M0 11.5 V2.5 Q0 0 2.3 0 H3.6 Q5.5 0 5.5 1.6 H7 Q7 0 8.8 0 H10 Q12.2 0 12.2 2.5 V11.5z" fill="#c4c4c4"/><text x="4.5" y="10.3" font-family="Liberation Serif" font-style="italic" font-size="8.5" fill="#1e1e1e">fx</text></svg>
<div class="t" style="left:1772px;top:560px;color:#c8c8c8">Lightning Bend</div>
<svg class="a" style="left:1753px;top:579px" width="13" height="12"><path d="M0 11.5 V2.5 Q0 0 2.3 0 H3.6 Q5.5 0 5.5 1.6 H7 Q7 0 8.8 0 H10 Q12.2 0 12.2 2.5 V11.5z" fill="#c4c4c4"/><text x="4.5" y="10.3" font-family="Liberation Serif" font-style="italic" font-size="8.5" fill="#1e1e1e">fx</text></svg>
<div class="t" style="left:1772px;top:577px;color:#c8c8c8">Magma</div>
<svg class="a" style="left:1753px;top:596px" width="13" height="12"><path d="M0 11.5 V2.5 Q0 0 2.3 0 H3.6 Q5.5 0 5.5 1.6 H7 Q7 0 8.8 0 H10 Q12.2 0 12.2 2.5 V11.5z" fill="#c4c4c4"/><text x="4.5" y="10.3" font-family="Liberation Serif" font-style="italic" font-size="8.5" fill="#1e1e1e">fx</text></svg>
<div class="t" style="left:1772px;top:594px;color:#c8c8c8">Orb</div>
<svg class="a" style="left:1753px;top:613px" width="13" height="12"><path d="M0 11.5 V2.5 Q0 0 2.3 0 H3.6 Q5.5 0 5.5 1.6 H7 Q7 0 8.8 0 H10 Q12.2 0 12.2 2.5 V11.5z" fill="#c4c4c4"/><text x="4.5" y="10.3" font-family="Liberation Serif" font-style="italic" font-size="8.5" fill="#1e1e1e">fx</text></svg>
<div class="t" style="left:1772px;top:611px;color:#c8c8c8">Pixels</div>
<svg class="a" style="left:1753px;top:630px" width="13" height="12"><path d="M0 11.5 V2.5 Q0 0 2.3 0 H3.6 Q5.5 0 5.5 1.6 H7 Q7 0 8.8 0 H10 Q12.2 0 12.2 2.5 V11.5z" fill="#c4c4c4"/><text x="4.5" y="10.3" font-family="Liberation Serif" font-style="italic" font-size="8.5" fill="#1e1e1e">fx</text></svg>
<div class="t" style="left:1772px;top:628px;color:#c8c8c8">Racing Rectangles</div>
<svg class="a" style="left:1753px;top:647px" width="13" height="12"><path d="M0 11.5 V2.5 Q0 0 2.3 0 H3.6 Q5.5 0 5.5 1.6 H7 Q7 0 8.8 0 H10 Q12.2 0 12.2 2.5 V11.5z" fill="#c4c4c4"/><text x="4.5" y="10.3" font-family="Liberation Serif" font-style="italic" font-size="8.5" fill="#1e1e1e">fx</text></svg>
<div class="t" style="left:1772px;top:645px;color:#c8c8c8">Red Speed</div>
<svg class="a" style="left:1753px;top:664px" width="13" height="12"><path d="M0 11.5 V2.5 Q0 0 2.3 0 H3.6 Q5.5 0 5.5 1.6 H7 Q7 0 8.8 0 H10 Q12.2 0 12.2 2.5 V11.5z" fill="#c4c4c4"/><text x="4.5" y="10.3" font-family="Liberation Serif" font-style="italic" font-size="8.5" fill="#1e1e1e">fx</text></svg>
<div class="t" style="left:1772px;top:662px;color:#c8c8c8">River</div>
<svg class="a" style="left:1753px;top:681px" width="13" height="12"><path d="M0 11.5 V2.5 Q0 0 2.3 0 H3.6 Q5.5 0 5.5 1.6 H7 Q7 0 8.8 0 H10 Q12.2 0 12.2 2.5 V11.5z" fill="#c4c4c4"/><text x="4.5" y="10.3" font-family="Liberation Serif" font-style="italic" font-size="8.5" fill="#1e1e1e">fx</text></svg>
<div class="t" style="left:1772px;top:679px;color:#c8c8c8">Rose Light</div>
<div class="a" style="left:1701px;top:687px;width:219px;height:4px;background:#161616"></div>
<!-- timeline -->
<div class="pn" style="left:1px;top:691px;width:1919px;height:344px"></div>
<div class="a" style="left:1px;top:691px;width:1919px;height:1px;background:#2d8ceb"></div>
<div class="a" style="left:1px;top:691px;width:1px;height:344px;background:#2d8ceb"></div>

<svg class="a" style="left:11px;top:702px" width="8" height="8"><path d="M1.5 1.5l5 5M6.5 1.5l-5 5" stroke="#9a9a9a" stroke-width="1.1"/></svg>
<div class="a" style="left:27px;top:699px;width:10px;height:10px;background:#ab9a7c"></div>
<div class="t" style="left:49px;top:698px;color:#c8c8c8">Banner Merged</div>
<svg class="a" style="left:135px;top:701px" width="9" height="9"><path d="M0 1.5h8.5M0 4.5h8.5M0 7.5h8.5" stroke="#c8c8c8" stroke-width="1.2"/></svg>
<div class="t" style="left:17px;top:720px;font-size:14.5px;line-height:18px;font-weight:bold;color:#2d8ceb;letter-spacing:0.7px">0;00;01;12</div>
<div class="t" style="left:11px;top:739px;font-size:10.5px;line-height:12px;color:#2273c4;letter-spacing:.1px">00042 (29.97 fps)</div>
<div class="a" style="left:107px;top:726px;width:226px;height:19px;background:#181818;border:1px solid #262626;border-radius:3px"></div>
<svg class="a" style="left:114px;top:729px" width="18" height="14"><circle cx="7.5" cy="5" r="3.6" stroke="#bdbdbd" stroke-width="1.2" fill="none"/><path d="M5 7.5 L1.5 11" stroke="#bdbdbd" stroke-width="1.3"/><path d="M11 8.5h5l-2.5 2.5z" fill="#bdbdbd"/></svg>
<svg class="a" style="left:340px;top:724px" width="190" height="24" fill="none">
<g fill="#bdbdbd" stroke="#bdbdbd">
 <path d="M8 8h7M13 8v9h4M13 12h4" stroke-width="1.3"/>
 <rect x="8" y="6.5" width="3" height="3" stroke="none"/><rect x="16.5" y="6.5" width="8" height="3" stroke="none"/><rect x="16.5" y="10.5" width="6" height="3" stroke="none"/><rect x="16.5" y="15" width="6" height="3" stroke="none"/>
 <path d="M20 18.5h5l-2.5 2.5z" stroke="none"/>
 <path d="M50 12l6-3 6 3v6l-6 3-6-3z M50 12l6 3 6-3 M56 15v6" fill="none" stroke-width="1.2"/>
 <circle cx="45" cy="7" r="2.5" stroke="none"/><path d="M45 2.5v9M40.5 7h9M42 4l6 6M48 4l-6 6" stroke-width="1"/>
 <path d="M78 13 Q78 6 84 6 Q90 6 90 13z" stroke="none"/><circle cx="81.8" cy="10" r="1.1" fill="#232323" stroke="none"/><circle cx="86.2" cy="10" r="1.1" fill="#232323" stroke="none"/><rect x="76" y="14" width="16" height="4" stroke="none" fill="#8a8a8a"/><path d="M84 13v5" stroke="#bdbdbd" stroke-width="2"/>
 <rect x="106.5" y="5.5" width="10" height="12" fill="none" stroke-width="1.2"/><path d="M104 8v11.5h10" fill="none" stroke-width="1.1"/><path d="M109 11.5h5" stroke-width="1.3"/><path d="M108 7v9M115 7v9" stroke-width="1" stroke-dasharray="1 1"/>
 <circle cx="137.5" cy="10" r="5.3" fill="#6a6a6a" stroke-width="1.1"/><path d="M132.5 12.5 Q129.5 15 131 17.5 Q133 19.5 136 16.5 M131 10.5 Q128 13.5 129.5 16.5" fill="none" stroke-width="1.1"/>
 <rect x="162.5" y="6.5" width="15" height="12" fill="none" stroke-width="1.2"/><path d="M165 9 Q169 9 170 13 Q171 16 176 16" fill="none" stroke-width="1.2"/><path d="M165 4v2M169 4v2M173 4v2M177 4v2M161 9h1M161 13h1M161 17h1" stroke-width="1"/>
</g></svg>
<div class="a" style="left:534px;top:692px;width:1px;height:330px;background:#000"></div>
<div class="a" style="left:535px;top:724px;width:1366px;height:10px;background:#000"></div>
<div class="a" style="left:541px;top:725px;width:1353px;height:8px;background:#6a6a6a"></div>
<div class="a" style="left:535px;top:725px;width:6px;height:8px;background:#2d8ceb;border-radius:5px 0 0 5px"></div>
<div class="a" style="left:1894px;top:725px;width:7px;height:8px;background:#2d8ceb;border-radius:0 5px 5px 0"></div>
<div class="t" style="left:533px;top:734px;font-size:10.5px;color:#a8a8a8;width:24px;overflow:hidden;direction:rtl">0:00s</div>
<div class="a" style="left:542px;top:747px;width:1px;height:6px;background:#8a8a8a"></div>
<div class="t" style="left:580.0px;top:734px;width:60px;text-align:center;font-size:10.5px;color:#a8a8a8">01s</div>
<div class="a" style="left:610px;top:748px;width:1px;height:5px;background:#8a8a8a"></div>
<div class="t" style="left:647.5px;top:734px;width:60px;text-align:center;font-size:10.5px;color:#a8a8a8">02s</div>
<div class="a" style="left:677px;top:748px;width:1px;height:5px;background:#8a8a8a"></div>
<div class="t" style="left:715.0px;top:734px;width:60px;text-align:center;font-size:10.5px;color:#a8a8a8">03s</div>
<div class="a" style="left:745px;top:748px;width:1px;height:5px;background:#8a8a8a"></div>
<div class="t" style="left:782.5px;top:734px;width:60px;text-align:center;font-size:10.5px;color:#a8a8a8">04s</div>
<div class="a" style="left:812px;top:748px;width:1px;height:5px;background:#8a8a8a"></div>
<div class="t" style="left:850.0px;top:734px;width:60px;text-align:center;font-size:10.5px;color:#a8a8a8">05s</div>
<div class="a" style="left:880px;top:748px;width:1px;height:5px;background:#8a8a8a"></div>
<div class="t" style="left:917.5px;top:734px;width:60px;text-align:center;font-size:10.5px;color:#a8a8a8">06s</div>
<div class="a" style="left:947px;top:748px;width:1px;height:5px;background:#8a8a8a"></div>
<div class="t" style="left:985.0px;top:734px;width:60px;text-align:center;font-size:10.5px;color:#a8a8a8">07s</div>
<div class="a" style="left:1015px;top:748px;width:1px;height:5px;background:#8a8a8a"></div>
<div class="t" style="left:1052.5px;top:734px;width:60px;text-align:center;font-size:10.5px;color:#a8a8a8">08s</div>
<div class="a" style="left:1082px;top:748px;width:1px;height:5px;background:#8a8a8a"></div>
<div class="t" style="left:1120.0px;top:734px;width:60px;text-align:center;font-size:10.5px;color:#a8a8a8">09s</div>
<div class="a" style="left:1150px;top:748px;width:1px;height:5px;background:#8a8a8a"></div>
<div class="t" style="left:1187.5px;top:734px;width:60px;text-align:center;font-size:10.5px;color:#a8a8a8">10s</div>
<div class="a" style="left:1217px;top:748px;width:1px;height:5px;background:#8a8a8a"></div>
<div class="t" style="left:1255.0px;top:734px;width:60px;text-align:center;font-size:10.5px;color:#a8a8a8">11s</div>
<div class="a" style="left:1285px;top:748px;width:1px;height:5px;background:#8a8a8a"></div>
<div class="t" style="left:1322.5px;top:734px;width:60px;text-align:center;font-size:10.5px;color:#a8a8a8">12s</div>
<div class="a" style="left:1352px;top:748px;width:1px;height:5px;background:#8a8a8a"></div>
<div class="t" style="left:1390.0px;top:734px;width:60px;text-align:center;font-size:10.5px;color:#a8a8a8">13s</div>
<div class="a" style="left:1420px;top:748px;width:1px;height:5px;background:#8a8a8a"></div>
<div class="t" style="left:1457.5px;top:734px;width:60px;text-align:center;font-size:10.5px;color:#a8a8a8">14s</div>
<div class="a" style="left:1487px;top:748px;width:1px;height:5px;background:#8a8a8a"></div>
<div class="t" style="left:1525.0px;top:734px;width:60px;text-align:center;font-size:10.5px;color:#a8a8a8">15s</div>
<div class="a" style="left:1555px;top:748px;width:1px;height:5px;background:#8a8a8a"></div>
<div class="t" style="left:1592.5px;top:734px;width:60px;text-align:center;font-size:10.5px;color:#a8a8a8">16s</div>
<div class="a" style="left:1622px;top:748px;width:1px;height:5px;background:#8a8a8a"></div>
<div class="t" style="left:1660.0px;top:734px;width:60px;text-align:center;font-size:10.5px;color:#a8a8a8">17s</div>
<div class="a" style="left:1690px;top:748px;width:1px;height:5px;background:#8a8a8a"></div>
<div class="t" style="left:1727.5px;top:734px;width:60px;text-align:center;font-size:10.5px;color:#a8a8a8">18s</div>
<div class="a" style="left:1757px;top:748px;width:1px;height:5px;background:#8a8a8a"></div>
<div class="t" style="left:1795.0px;top:734px;width:60px;text-align:center;font-size:10.5px;color:#a8a8a8">19s</div>
<div class="a" style="left:1825px;top:748px;width:1px;height:5px;background:#8a8a8a"></div>
<div class="t" style="left:1862.5px;top:734px;width:60px;text-align:center;font-size:10.5px;color:#a8a8a8">20s</div>
<div class="a" style="left:1892px;top:748px;width:1px;height:5px;background:#8a8a8a"></div>
<div class="a" style="left:2px;top:754px;width:1899px;height:1px;background:#000"></div>
<div class="a" style="left:2px;top:755px;width:532px;height:18px;background:#2f2f2f"></div>
<div class="a" style="left:541px;top:755px;width:1353px;height:14px;background:#646464"></div>
<div class="a" style="left:536px;top:755px;width:5px;height:14px;background:#2d8ceb;border-radius:4px 0 0 4px"></div>
<div class="a" style="left:1894px;top:755px;width:6px;height:14px;background:#2d8ceb;border-radius:0 4px 4px 0"></div>
<div class="a" style="left:535px;top:769px;width:1366px;height:1px;background:#000"></div>
<div class="a" style="left:541px;top:770px;width:1353px;height:3px;background:#1ec42a"></div>
<div class="a" style="left:2px;top:773px;width:1899px;height:1px;background:#000"></div>
<svg class="a" style="left:2px;top:755px" width="532" height="18" fill="none">
<g fill="#bdbdbd" stroke="#bdbdbd">
 <path d="M5.5 9.5 Q11 3 16.5 9.5 Q11 16 5.5 9.5z" stroke="none"/><circle cx="11" cy="9.5" r="2.2" fill="#2f2f2f" stroke="none"/><circle cx="11" cy="9.5" r="1" stroke="none"/>
 <path d="M20 7h3l4-3.5v12L23 12h-3z" stroke="none"/><path d="M28 6.5 Q30 9.5 28 12.5 M29.5 4.5 Q33 9.5 29.5 14.5" fill="none" stroke-width="1"/>
 <circle cx="40.5" cy="9.5" r="3.6" stroke="none"/>
 <rect x="51" y="8" width="9" height="6.5" stroke="none"/><path d="M53 8V6 Q53 3.5 55.5 3.5 Q58 3.5 58 6v2" fill="none" stroke-width="1.3"/><path d="M55.5 10v3" stroke="#2f2f2f" stroke-width="1.2"/>
 <path d="M81 4.5h5.5l7 7-5.5 5.5-7-7z" stroke="none"/><circle cx="83.5" cy="7" r="1" fill="#2f2f2f" stroke="none"/>
 <path d="M105 6.5h5M105 9.5h5M106.5 4.5l-.8 7M109 4.5l-.8 7" stroke-width=".8"/>
 <rect x="120.5" y="11" width="2" height="1.2" stroke="none"/>
</g>
<g stroke="#111" stroke-width="1.5"><path d="M68 4v11M100 4v11M133 4v11M263 4v11"/></g>
</svg>
<svg class="a" style="left:380px;top:755px" width="140" height="18" fill="none">
<g fill="#bdbdbd" stroke="#bdbdbd">
 <path d="M8 10 Q8 4 12.5 4 Q17 4 17 10z" stroke="none"/><circle cx="11" cy="7.3" r="1" fill="#2f2f2f" stroke="none"/><circle cx="14.5" cy="7.3" r="1" fill="#2f2f2f" stroke="none"/>
 <path d="M6 11.5h13" stroke-width="1"/><path d="M12.5 10v5" stroke-width="1.6"/>
 <circle cx="27.5" cy="9.5" r="1.6" stroke-width="1" fill="none"/><path d="M27.5 4.5v2.5M27.5 12v2.5M22.5 9.5h2.5M30 9.5h2.5M24 6l1.5 1.5M29.5 11.5l1.5 1.5M31 6l-1.5 1.5M25.5 11.5L24 13" stroke-width="1"/>
 <path d="M37.5 4.5l9 9.5" stroke-width="1.4" stroke-dasharray="1.4 .9"/>
</g>
<text x="52" y="14" font-family="Liberation Serif" font-style="italic" font-size="13" fill="#bdbdbd" letter-spacing="-.5">fx</text>
<g fill="#bdbdbd" stroke="#bdbdbd">
 <rect x="68" y="4" width="9.5" height="10" stroke="none"/><path d="M66.5 5.5v9.5h11" fill="none" stroke-width="1"/>
 <path d="M71.5 9h3.5" stroke="#2f2f2f" stroke-width="1.2"/><path d="M69.7 5v1.2M69.7 7.5v1.2M69.7 10v1.2M69.7 12.5v1M76 5v1.2M76 7.5v1.2M76 10v1.2M76 12.5v1" stroke="#2f2f2f" stroke-width=".9"/>
 <circle cx="89.5" cy="8.5" r="4.5" fill="#6a6a6a" stroke-width="1"/><path d="M85.5 11 Q83 13 84.5 15 Q86.5 16.5 89.5 13.5 M85 8.5 Q81.5 12 83.5 14.5" fill="none" stroke-width="1"/>
 <circle cx="102.5" cy="9.5" r="4.8" fill="none" stroke-width="1"/><path d="M99 13 L106 6 A4.8 4.8 0 0 1 99 13z" stroke="none"/>
 <path d="M112.5 6.5l5.5-3 5.5 3v6.5l-5.5 3-5.5-3z M112.5 6.5l5.5 3 5.5-3 M118 9.5v6.5" fill="none" stroke-width="1"/>
</g>
<g stroke="#111" stroke-width="1.5"><path d="M1.5 4v11M138.5 4v11"/></g>
</svg>
<div class="t" style="left:140px;top:758px;font-size:10px;letter-spacing:-.35px;color:#a8a8a8">Layer Name</div>
<div class="t" style="left:270px;top:758px;font-size:10px;letter-spacing:-.35px;color:#a8a8a8">Parent &amp; Link</div>
<div class="a" style="left:2px;top:774px;width:532px;height:16px;background:#2f2f2f"></div>
<div class="a" style="left:2px;top:790px;width:532px;height:1px;background:#262626"></div>
<div class="a" style="left:535px;top:774px;width:1366px;height:16px;background:#3a3a3a"></div>
<div class="a" style="left:535px;top:774px;width:6px;height:16px;background:#333"></div>
<div class="a" style="left:1894px;top:774px;width:7px;height:16px;background:#2e2e2e"></div>
<div class="a" style="left:535px;top:790px;width:1366px;height:1px;background:#262626"></div>
<div class="a" style="left:616px;top:774px;width:1278px;height:16px;background:#767488"></div>
<div class="a" style="left:6px;top:775px;width:13px;height:13px;background:#262626"></div>
<div class="a" style="left:36px;top:775px;width:13px;height:13px;background:#262626"></div>
<div class="a" style="left:51px;top:775px;width:13px;height:13px;background:#262626"></div>
<svg class="a" style="left:6px;top:775px" width="13" height="13"><path d="M1.3 6.8 Q6.5 0.3 11.7 6.8 Q6.5 13.3 1.3 6.8z" fill="#c4c4c4"/><circle cx="6.5" cy="6.6" r="2.3" fill="#2a2a2a"/><circle cx="6.3" cy="6.3" r=".8" fill="#777"/></svg>
<svg class="a" style="left:75px;top:778px" width="6" height="9"><path d="M1 .5 L4.5 4.5 L1 8.5" stroke="#bdbdbd" stroke-width="1" fill="none"/></svg>
<div class="a" style="left:87px;top:776px;width:12px;height:12px;background:#a9a8cc"></div>
<div class="t" style="left:108px;top:774px;color:#c8c8c8">7</div>
<svg class="a" style="left:139px;top:776px" width="11" height="13"><path d="M.5 .5h7.5l2.5 2.5v9.5h-10z" fill="#001820" stroke="#2598c2" stroke-width=".9"/><text x="1.8" y="7.3" font-family="Liberation Sans" font-size="6.5" font-weight="bold" fill="#d8e4e8">Ps</text><path d="M2.7 10.3h4.5" stroke="#c8d0d0" stroke-width="1.6"/></svg>
<div class="t" style="left:157px;top:775px;color:#c8c8c8">O</div>
<svg class="a" style="left:269px;top:776px" width="13" height="12"><path d="M5.40 5.50 L5.32 5.62 L5.27 5.76 L5.25 5.92 L5.26 6.10 L5.32 6.28 L5.41 6.45 L5.55 6.62 L5.73 6.77 L5.95 6.88 L6.19 6.95 L6.46 6.98 L6.74 6.96 L7.03 6.88 L7.32 6.75 L7.58 6.56 L7.81 6.31 L8.01 6.01 L8.15 5.67 L8.24 5.29 L8.25 4.90 L8.20 4.49 L8.07 4.08 L7.86 3.69 L7.58 3.33 L7.22 3.02 L6.81 2.76 L6.35 2.58 L5.84 2.48 L5.31 2.46 L4.78 2.54 L4.25 2.72 L3.74 2.99 L3.28 3.36 L2.88 3.81 L2.56 4.33 L2.33 4.92 L2.19 5.55 L2.17 6.21 L2.27 6.88 L2.48 7.53 L2.81 8.16 L3.25 8.72 L3.79 9.22 L4.42 9.62 L5.12 9.91 L5.88 10.09 L6.67 10.12 L7.47 10.03 L8.26 9.79 L9.00 9.41 L9.69 8.91 L10.28 8.28 L10.77 7.55 L11.13 6.73 L11.36 5.85 L11.42 4.93 L11.33 4.00 L11.08 3.08 L10.67 2.20 L10.10 1.40" stroke="#bdbdbd" stroke-width="1.1" fill="none"/></svg>
<div class="a" style="left:288px;top:775px;width:89px;height:14px;background:#1c1c1c"></div>
<div class="t" style="left:295px;top:775px;color:#c8c8c8">None</div>
<svg class="a" style="left:364px;top:779px" width="9" height="6"><path d="M.5 .5l4 4 4-4" stroke="#bdbdbd" stroke-width="1.1" fill="none"/></svg>
<div class="a" style="left:386px;top:775px;width:13px;height:13px;background:#262626"></div>
<svg class="a" style="left:386px;top:775px" width="13" height="13"><path d="M2.3 8 Q2.3 2.3 6.5 2.3 Q10.7 2.3 10.7 8z" fill="#bdbdbd"/><circle cx="4.7" cy="6" r="1" fill="#262626"/><circle cx="8.3" cy="6" r="1" fill="#262626"/><path d="M.5 9.5h12" stroke="#bdbdbd" stroke-width="1"/><path d="M6.5 8v4.5" stroke="#bdbdbd" stroke-width="1.8"/></svg>
<div class="a" style="left:416px;top:775px;width:13px;height:13px;background:#262626"></div>
<svg class="a" style="left:416px;top:775px" width="13" height="13"><path d="M1.5 11.5 L11.5 1.5" stroke="#bdbdbd" stroke-width="1.3"/></svg>
<div class="a" style="left:461px;top:775px;width:13px;height:13px;background:#262626"></div>
<div class="a" style="left:476px;top:775px;width:13px;height:13px;background:#262626"></div>
<div class="a" style="left:491px;top:775px;width:13px;height:13px;background:#262626"></div>
<div class="a" style="left:2px;top:791px;width:532px;height:16px;background:#2f2f2f"></div>
<div class="a" style="left:2px;top:807px;width:532px;height:1px;background:#262626"></div>
<div class="a" style="left:535px;top:791px;width:1366px;height:16px;background:#3a3a3a"></div>
<div class="a" style="left:535px;top:791px;width:6px;height:16px;background:#333"></div>
<div class="a" style="left:1894px;top:791px;width:7px;height:16px;background:#2e2e2e"></div>
<div class="a" style="left:535px;top:807px;width:1366px;height:1px;background:#262626"></div>
<div class="a" style="left:706px;top:791px;width:1188px;height:16px;background:#767488"></div>
<div class="a" style="left:6px;top:792px;width:13px;height:13px;background:#262626"></div>
<div class="a" style="left:36px;top:792px;width:13px;height:13px;background:#262626"></div>
<div class="a" style="left:51px;top:792px;width:13px;height:13px;background:#262626"></div>
<svg class="a" style="left:6px;top:792px" width="13" height="13"><path d="M1.3 6.8 Q6.5 0.3 11.7 6.8 Q6.5 13.3 1.3 6.8z" fill="#c4c4c4"/><circle cx="6.5" cy="6.6" r="2.3" fill="#2a2a2a"/><circle cx="6.3" cy="6.3" r=".8" fill="#777"/></svg>
<svg class="a" style="left:75px;top:795px" width="6" height="9"><path d="M1 .5 L4.5 4.5 L1 8.5" stroke="#bdbdbd" stroke-width="1" fill="none"/></svg>
<div class="a" style="left:87px;top:793px;width:12px;height:12px;background:#a9a8cc"></div>
<div class="t" style="left:108px;top:791px;color:#c8c8c8">8</div>
<svg class="a" style="left:139px;top:793px" width="11" height="13"><path d="M.5 .5h7.5l2.5 2.5v9.5h-10z" fill="#001820" stroke="#2598c2" stroke-width=".9"/><text x="1.8" y="7.3" font-family="Liberation Sans" font-size="6.5" font-weight="bold" fill="#d8e4e8">Ps</text><path d="M2.7 10.3h4.5" stroke="#c8d0d0" stroke-width="1.6"/></svg>
<div class="t" style="left:157px;top:792px;color:#c8c8c8">T</div>
<svg class="a" style="left:269px;top:793px" width="13" height="12"><path d="M5.40 5.50 L5.32 5.62 L5.27 5.76 L5.25 5.92 L5.26 6.10 L5.32 6.28 L5.41 6.45 L5.55 6.62 L5.73 6.77 L5.95 6.88 L6.19 6.95 L6.46 6.98 L6.74 6.96 L7.03 6.88 L7.32 6.75 L7.58 6.56 L7.81 6.31 L8.01 6.01 L8.15 5.67 L8.24 5.29 L8.25 4.90 L8.20 4.49 L8.07 4.08 L7.86 3.69 L7.58 3.33 L7.22 3.02 L6.81 2.76 L6.35 2.58 L5.84 2.48 L5.31 2.46 L4.78 2.54 L4.25 2.72 L3.74 2.99 L3.28 3.36 L2.88 3.81 L2.56 4.33 L2.33 4.92 L2.19 5.55 L2.17 6.21 L2.27 6.88 L2.48 7.53 L2.81 8.16 L3.25 8.72 L3.79 9.22 L4.42 9.62 L5.12 9.91 L5.88 10.09 L6.67 10.12 L7.47 10.03 L8.26 9.79 L9.00 9.41 L9.69 8.91 L10.28 8.28 L10.77 7.55 L11.13 6.73 L11.36 5.85 L11.42 4.93 L11.33 4.00 L11.08 3.08 L10.67 2.20 L10.10 1.40" stroke="#bdbdbd" stroke-width="1.1" fill="none"/></svg>
<div class="a" style="left:288px;top:792px;width:89px;height:14px;background:#1c1c1c"></div>
<div class="t" style="left:295px;top:792px;color:#c8c8c8">None</div>
<svg class="a" style="left:364px;top:796px" width="9" height="6"><path d="M.5 .5l4 4 4-4" stroke="#bdbdbd" stroke-width="1.1" fill="none"/></svg>
<div class="a" style="left:386px;top:792px;width:13px;height:13px;background:#262626"></div>
<svg class="a" style="left:386px;top:792px" width="13" height="13"><path d="M2.3 8 Q2.3 2.3 6.5 2.3 Q10.7 2.3 10.7 8z" fill="#bdbdbd"/><circle cx="4.7" cy="6" r="1" fill="#262626"/><circle cx="8.3" cy="6" r="1" fill="#262626"/><path d="M.5 9.5h12" stroke="#bdbdbd" stroke-width="1"/><path d="M6.5 8v4.5" stroke="#bdbdbd" stroke-width="1.8"/></svg>
<div class="a" style="left:416px;top:792px;width:13px;height:13px;background:#262626"></div>
<svg class="a" style="left:416px;top:792px" width="13" height="13"><path d="M1.5 11.5 L11.5 1.5" stroke="#bdbdbd" stroke-width="1.3"/></svg>
<div class="a" style="left:461px;top:792px;width:13px;height:13px;background:#262626"></div>
<div class="a" style="left:476px;top:792px;width:13px;height:13px;background:#262626"></div>
<div class="a" style="left:491px;top:792px;width:13px;height:13px;background:#262626"></div>
<div class="a" style="left:2px;top:808px;width:532px;height:16px;background:#2f2f2f"></div>
<div class="a" style="left:2px;top:824px;width:532px;height:1px;background:#262626"></div>
<div class="a" style="left:535px;top:808px;width:1366px;height:16px;background:#3a3a3a"></div>
<div class="a" style="left:535px;top:808px;width:6px;height:16px;background:#333"></div>
<div class="a" style="left:1894px;top:808px;width:7px;height:16px;background:#2e2e2e"></div>
<div class="a" style="left:535px;top:824px;width:1366px;height:1px;background:#262626"></div>
<div class="a" style="left:752px;top:808px;width:1142px;height:16px;background:#767488"></div>
<div class="a" style="left:6px;top:809px;width:13px;height:13px;background:#262626"></div>
<div class="a" style="left:36px;top:809px;width:13px;height:13px;background:#262626"></div>
<div class="a" style="left:51px;top:809px;width:13px;height:13px;background:#262626"></div>
<svg class="a" style="left:6px;top:809px" width="13" height="13"><path d="M1.3 6.8 Q6.5 0.3 11.7 6.8 Q6.5 13.3 1.3 6.8z" fill="#c4c4c4"/><circle cx="6.5" cy="6.6" r="2.3" fill="#2a2a2a"/><circle cx="6.3" cy="6.3" r=".8" fill="#777"/></svg>
<svg class="a" style="left:75px;top:812px" width="6" height="9"><path d="M1 .5 L4.5 4.5 L1 8.5" stroke="#bdbdbd" stroke-width="1" fill="none"/></svg>
<div class="a" style="left:87px;top:810px;width:12px;height:12px;background:#a9a8cc"></div>
<div class="t" style="left:108px;top:808px;color:#c8c8c8">9</div>
<svg class="a" style="left:139px;top:810px" width="11" height="13"><path d="M.5 .5h7.5l2.5 2.5v9.5h-10z" fill="#001820" stroke="#2598c2" stroke-width=".9"/><text x="1.8" y="7.3" font-family="Liberation Sans" font-size="6.5" font-weight="bold" fill="#d8e4e8">Ps</text><path d="M2.7 10.3h4.5" stroke="#c8d0d0" stroke-width="1.6"/></svg>
<div class="t" style="left:157px;top:809px;color:#c8c8c8">O</div>
<svg class="a" style="left:269px;top:810px" width="13" height="12"><path d="M5.40 5.50 L5.32 5.62 L5.27 5.76 L5.25 5.92 L5.26 6.10 L5.32 6.28 L5.41 6.45 L5.55 6.62 L5.73 6.77 L5.95 6.88 L6.19 6.95 L6.46 6.98 L6.74 6.96 L7.03 6.88 L7.32 6.75 L7.58 6.56 L7.81 6.31 L8.01 6.01 L8.15 5.67 L8.24 5.29 L8.25 4.90 L8.20 4.49 L8.07 4.08 L7.86 3.69 L7.58 3.33 L7.22 3.02 L6.81 2.76 L6.35 2.58 L5.84 2.48 L5.31 2.46 L4.78 2.54 L4.25 2.72 L3.74 2.99 L3.28 3.36 L2.88 3.81 L2.56 4.33 L2.33 4.92 L2.19 5.55 L2.17 6.21 L2.27 6.88 L2.48 7.53 L2.81 8.16 L3.25 8.72 L3.79 9.22 L4.42 9.62 L5.12 9.91 L5.88 10.09 L6.67 10.12 L7.47 10.03 L8.26 9.79 L9.00 9.41 L9.69 8.91 L10.28 8.28 L10.77 7.55 L11.13 6.73 L11.36 5.85 L11.42 4.93 L11.33 4.00 L11.08 3.08 L10.67 2.20 L10.10 1.40" stroke="#bdbdbd" stroke-width="1.1" fill="none"/></svg>
<div class="a" style="left:288px;top:809px;width:89px;height:14px;background:#1c1c1c"></div>
<div class="t" style="left:295px;top:809px;color:#c8c8c8">None</div>
<svg class="a" style="left:364px;top:813px" width="9" height="6"><path d="M.5 .5l4 4 4-4" stroke="#bdbdbd" stroke-width="1.1" fill="none"/></svg>
<div class="a" style="left:386px;top:809px;width:13px;height:13px;background:#262626"></div>
<svg class="a" style="left:386px;top:809px" width="13" height="13"><path d="M2.3 8 Q2.3 2.3 6.5 2.3 Q10.7 2.3 10.7 8z" fill="#bdbdbd"/><circle cx="4.7" cy="6" r="1" fill="#262626"/><circle cx="8.3" cy="6" r="1" fill="#262626"/><path d="M.5 9.5h12" stroke="#bdbdbd" stroke-width="1"/><path d="M6.5 8v4.5" stroke="#bdbdbd" stroke-width="1.8"/></svg>
<div class="a" style="left:416px;top:809px;width:13px;height:13px;background:#262626"></div>
<svg class="a" style="left:416px;top:809px" width="13" height="13"><path d="M1.5 11.5 L11.5 1.5" stroke="#bdbdbd" stroke-width="1.3"/></svg>
<div class="a" style="left:461px;top:809px;width:13px;height:13px;background:#262626"></div>
<div class="a" style="left:476px;top:809px;width:13px;height:13px;background:#262626"></div>
<div class="a" style="left:491px;top:809px;width:13px;height:13px;background:#262626"></div>
<div class="a" style="left:2px;top:825px;width:532px;height:16px;background:#2f2f2f"></div>
<div class="a" style="left:2px;top:841px;width:532px;height:1px;background:#262626"></div>
<div class="a" style="left:535px;top:825px;width:1366px;height:16px;background:#3a3a3a"></div>
<div class="a" style="left:535px;top:825px;width:6px;height:16px;background:#333"></div>
<div class="a" style="left:1894px;top:825px;width:7px;height:16px;background:#2e2e2e"></div>
<div class="a" style="left:535px;top:841px;width:1366px;height:1px;background:#262626"></div>
<div class="a" style="left:1022px;top:825px;width:872px;height:16px;background:#767488"></div>
<div class="a" style="left:6px;top:826px;width:13px;height:13px;background:#262626"></div>
<div class="a" style="left:36px;top:826px;width:13px;height:13px;background:#262626"></div>
<div class="a" style="left:51px;top:826px;width:13px;height:13px;background:#262626"></div>
<svg class="a" style="left:6px;top:826px" width="13" height="13"><path d="M1.3 6.8 Q6.5 0.3 11.7 6.8 Q6.5 13.3 1.3 6.8z" fill="#c4c4c4"/><circle cx="6.5" cy="6.6" r="2.3" fill="#2a2a2a"/><circle cx="6.3" cy="6.3" r=".8" fill="#777"/></svg>
<svg class="a" style="left:75px;top:829px" width="6" height="9"><path d="M1 .5 L4.5 4.5 L1 8.5" stroke="#bdbdbd" stroke-width="1" fill="none"/></svg>
<div class="a" style="left:87px;top:827px;width:12px;height:12px;background:#a9a8cc"></div>
<div class="t" style="left:108px;top:825px;color:#c8c8c8">10</div>
<svg class="a" style="left:139px;top:827px" width="11" height="13"><path d="M.5 .5h7.5l2.5 2.5v9.5h-10z" fill="#001820" stroke="#2598c2" stroke-width=".9"/><text x="1.8" y="7.3" font-family="Liberation Sans" font-size="6.5" font-weight="bold" fill="#d8e4e8">Ps</text><path d="M2.7 10.3h4.5" stroke="#c8d0d0" stroke-width="1.6"/></svg>
<div class="t" style="left:157px;top:826px;color:#c8c8c8">N</div>
<svg class="a" style="left:269px;top:827px" width="13" height="12"><path d="M5.40 5.50 L5.32 5.62 L5.27 5.76 L5.25 5.92 L5.26 6.10 L5.32 6.28 L5.41 6.45 L5.55 6.62 L5.73 6.77 L5.95 6.88 L6.19 6.95 L6.46 6.98 L6.74 6.96 L7.03 6.88 L7.32 6.75 L7.58 6.56 L7.81 6.31 L8.01 6.01 L8.15 5.67 L8.24 5.29 L8.25 4.90 L8.20 4.49 L8.07 4.08 L7.86 3.69 L7.58 3.33 L7.22 3.02 L6.81 2.76 L6.35 2.58 L5.84 2.48 L5.31 2.46 L4.78 2.54 L4.25 2.72 L3.74 2.99 L3.28 3.36 L2.88 3.81 L2.56 4.33 L2.33 4.92 L2.19 5.55 L2.17 6.21 L2.27 6.88 L2.48 7.53 L2.81 8.16 L3.25 8.72 L3.79 9.22 L4.42 9.62 L5.12 9.91 L5.88 10.09 L6.67 10.12 L7.47 10.03 L8.26 9.79 L9.00 9.41 L9.69 8.91 L10.28 8.28 L10.77 7.55 L11.13 6.73 L11.36 5.85 L11.42 4.93 L11.33 4.00 L11.08 3.08 L10.67 2.20 L10.10 1.40" stroke="#bdbdbd" stroke-width="1.1" fill="none"/></svg>
<div class="a" style="left:288px;top:826px;width:89px;height:14px;background:#1c1c1c"></div>
<div class="t" style="left:295px;top:826px;color:#c8c8c8">None</div>
<svg class="a" style="left:364px;top:830px" width="9" height="6"><path d="M.5 .5l4 4 4-4" stroke="#bdbdbd" stroke-width="1.1" fill="none"/></svg>
<div class="a" style="left:386px;top:826px;width:13px;height:13px;background:#262626"></div>
<svg class="a" style="left:386px;top:826px" width="13" height="13"><path d="M2.3 8 Q2.3 2.3 6.5 2.3 Q10.7 2.3 10.7 8z" fill="#bdbdbd"/><circle cx="4.7" cy="6" r="1" fill="#262626"/><circle cx="8.3" cy="6" r="1" fill="#262626"/><path d="M.5 9.5h12" stroke="#bdbdbd" stroke-width="1"/><path d="M6.5 8v4.5" stroke="#bdbdbd" stroke-width="1.8"/></svg>
<div class="a" style="left:416px;top:826px;width:13px;height:13px;background:#262626"></div>
<svg class="a" style="left:416px;top:826px" width="13" height="13"><path d="M1.5 11.5 L11.5 1.5" stroke="#bdbdbd" stroke-width="1.3"/></svg>
<div class="a" style="left:461px;top:826px;width:13px;height:13px;background:#262626"></div>
<div class="a" style="left:476px;top:826px;width:13px;height:13px;background:#262626"></div>
<div class="a" style="left:491px;top:826px;width:13px;height:13px;background:#262626"></div>
<div class="a" style="left:2px;top:842px;width:532px;height:16px;background:#2f2f2f"></div>
<div class="a" style="left:2px;top:858px;width:532px;height:1px;background:#262626"></div>
<div class="a" style="left:535px;top:842px;width:1366px;height:16px;background:#3a3a3a"></div>
<div class="a" style="left:535px;top:842px;width:6px;height:16px;background:#333"></div>
<div class="a" style="left:1894px;top:842px;width:7px;height:16px;background:#2e2e2e"></div>
<div class="a" style="left:535px;top:858px;width:1366px;height:1px;background:#262626"></div>
<div class="a" style="left:1067px;top:842px;width:827px;height:16px;background:#767488"></div>
<div class="a" style="left:6px;top:843px;width:13px;height:13px;background:#262626"></div>
<div class="a" style="left:36px;top:843px;width:13px;height:13px;background:#262626"></div>
<div class="a" style="left:51px;top:843px;width:13px;height:13px;background:#262626"></div>
<svg class="a" style="left:6px;top:843px" width="13" height="13"><path d="M1.3 6.8 Q6.5 0.3 11.7 6.8 Q6.5 13.3 1.3 6.8z" fill="#c4c4c4"/><circle cx="6.5" cy="6.6" r="2.3" fill="#2a2a2a"/><circle cx="6.3" cy="6.3" r=".8" fill="#777"/></svg>
<svg class="a" style="left:75px;top:846px" width="6" height="9"><path d="M1 .5 L4.5 4.5 L1 8.5" stroke="#bdbdbd" stroke-width="1" fill="none"/></svg>
<div class="a" style="left:87px;top:844px;width:12px;height:12px;background:#a9a8cc"></div>
<div class="t" style="left:108px;top:842px;color:#c8c8c8">11</div>
<svg class="a" style="left:139px;top:844px" width="11" height="13"><path d="M.5 .5h7.5l2.5 2.5v9.5h-10z" fill="#001820" stroke="#2598c2" stroke-width=".9"/><text x="1.8" y="7.3" font-family="Liberation Sans" font-size="6.5" font-weight="bold" fill="#d8e4e8">Ps</text><path d="M2.7 10.3h4.5" stroke="#c8d0d0" stroke-width="1.6"/></svg>
<div class="t" style="left:157px;top:843px;color:#c8c8c8">A</div>
<svg class="a" style="left:269px;top:844px" width="13" height="12"><path d="M5.40 5.50 L5.32 5.62 L5.27 5.76 L5.25 5.92 L5.26 6.10 L5.32 6.28 L5.41 6.45 L5.55 6.62 L5.73 6.77 L5.95 6.88 L6.19 6.95 L6.46 6.98 L6.74 6.96 L7.03 6.88 L7.32 6.75 L7.58 6.56 L7.81 6.31 L8.01 6.01 L8.15 5.67 L8.24 5.29 L8.25 4.90 L8.20 4.49 L8.07 4.08 L7.86 3.69 L7.58 3.33 L7.22 3.02 L6.81 2.76 L6.35 2.58 L5.84 2.48 L5.31 2.46 L4.78 2.54 L4.25 2.72 L3.74 2.99 L3.28 3.36 L2.88 3.81 L2.56 4.33 L2.33 4.92 L2.19 5.55 L2.17 6.21 L2.27 6.88 L2.48 7.53 L2.81 8.16 L3.25 8.72 L3.79 9.22 L4.42 9.62 L5.12 9.91 L5.88 10.09 L6.67 10.12 L7.47 10.03 L8.26 9.79 L9.00 9.41 L9.69 8.91 L10.28 8.28 L10.77 7.55 L11.13 6.73 L11.36 5.85 L11.42 4.93 L11.33 4.00 L11.08 3.08 L10.67 2.20 L10.10 1.40" stroke="#bdbdbd" stroke-width="1.1" fill="none"/></svg>
<div class="a" style="left:288px;top:843px;width:89px;height:14px;background:#1c1c1c"></div>
<div class="t" style="left:295px;top:843px;color:#c8c8c8">None</div>
<svg class="a" style="left:364px;top:847px" width="9" height="6"><path d="M.5 .5l4 4 4-4" stroke="#bdbdbd" stroke-width="1.1" fill="none"/></svg>
<div class="a" style="left:386px;top:843px;width:13px;height:13px;background:#262626"></div>
<svg class="a" style="left:386px;top:843px" width="13" height="13"><path d="M2.3 8 Q2.3 2.3 6.5 2.3 Q10.7 2.3 10.7 8z" fill="#bdbdbd"/><circle cx="4.7" cy="6" r="1" fill="#262626"/><circle cx="8.3" cy="6" r="1" fill="#262626"/><path d="M.5 9.5h12" stroke="#bdbdbd" stroke-width="1"/><path d="M6.5 8v4.5" stroke="#bdbdbd" stroke-width="1.8"/></svg>
<div class="a" style="left:416px;top:843px;width:13px;height:13px;background:#262626"></div>
<svg class="a" style="left:416px;top:843px" width="13" height="13"><path d="M1.5 11.5 L11.5 1.5" stroke="#bdbdbd" stroke-width="1.3"/></svg>
<div class="a" style="left:461px;top:843px;width:13px;height:13px;background:#262626"></div>
<div class="a" style="left:476px;top:843px;width:13px;height:13px;background:#262626"></div>
<div class="a" style="left:491px;top:843px;width:13px;height:13px;background:#262626"></div>
<div class="a" style="left:2px;top:859px;width:532px;height:16px;background:#2f2f2f"></div>
<div class="a" style="left:2px;top:875px;width:532px;height:1px;background:#262626"></div>
<div class="a" style="left:535px;top:859px;width:1366px;height:16px;background:#3a3a3a"></div>
<div class="a" style="left:535px;top:859px;width:6px;height:16px;background:#333"></div>
<div class="a" style="left:1894px;top:859px;width:7px;height:16px;background:#2e2e2e"></div>
<div class="a" style="left:535px;top:875px;width:1366px;height:1px;background:#262626"></div>
<div class="a" style="left:1112px;top:859px;width:782px;height:16px;background:#767488"></div>
<div class="a" style="left:6px;top:860px;width:13px;height:13px;background:#262626"></div>
<div class="a" style="left:36px;top:860px;width:13px;height:13px;background:#262626"></div>
<div class="a" style="left:51px;top:860px;width:13px;height:13px;background:#262626"></div>
<svg class="a" style="left:6px;top:860px" width="13" height="13"><path d="M1.3 6.8 Q6.5 0.3 11.7 6.8 Q6.5 13.3 1.3 6.8z" fill="#c4c4c4"/><circle cx="6.5" cy="6.6" r="2.3" fill="#2a2a2a"/><circle cx="6.3" cy="6.3" r=".8" fill="#777"/></svg>
<svg class="a" style="left:75px;top:863px" width="6" height="9"><path d="M1 .5 L4.5 4.5 L1 8.5" stroke="#bdbdbd" stroke-width="1" fill="none"/></svg>
<div class="a" style="left:87px;top:861px;width:12px;height:12px;background:#a9a8cc"></div>
<div class="t" style="left:108px;top:859px;color:#c8c8c8">12</div>
<svg class="a" style="left:139px;top:861px" width="11" height="13"><path d="M.5 .5h7.5l2.5 2.5v9.5h-10z" fill="#001820" stroke="#2598c2" stroke-width=".9"/><text x="1.8" y="7.3" font-family="Liberation Sans" font-size="6.5" font-weight="bold" fill="#d8e4e8">Ps</text><path d="M2.7 10.3h4.5" stroke="#c8d0d0" stroke-width="1.6"/></svg>
<div class="t" style="left:157px;top:860px;color:#c8c8c8">I</div>
<svg class="a" style="left:269px;top:861px" width="13" height="12"><path d="M5.40 5.50 L5.32 5.62 L5.27 5.76 L5.25 5.92 L5.26 6.10 L5.32 6.28 L5.41 6.45 L5.55 6.62 L5.73 6.77 L5.95 6.88 L6.19 6.95 L6.46 6.98 L6.74 6.96 L7.03 6.88 L7.32 6.75 L7.58 6.56 L7.81 6.31 L8.01 6.01 L8.15 5.67 L8.24 5.29 L8.25 4.90 L8.20 4.49 L8.07 4.08 L7.86 3.69 L7.58 3.33 L7.22 3.02 L6.81 2.76 L6.35 2.58 L5.84 2.48 L5.31 2.46 L4.78 2.54 L4.25 2.72 L3.74 2.99 L3.28 3.36 L2.88 3.81 L2.56 4.33 L2.33 4.92 L2.19 5.55 L2.17 6.21 L2.27 6.88 L2.48 7.53 L2.81 8.16 L3.25 8.72 L3.79 9.22 L4.42 9.62 L5.12 9.91 L5.88 10.09 L6.67 10.12 L7.47 10.03 L8.26 9.79 L9.00 9.41 L9.69 8.91 L10.28 8.28 L10.77 7.55 L11.13 6.73 L11.36 5.85 L11.42 4.93 L11.33 4.00 L11.08 3.08 L10.67 2.20 L10.10 1.40" stroke="#bdbdbd" stroke-width="1.1" fill="none"/></svg>
<div class="a" style="left:288px;top:860px;width:89px;height:14px;background:#1c1c1c"></div>
<div class="t" style="left:295px;top:860px;color:#c8c8c8">None</div>
<svg class="a" style="left:364px;top:864px" width="9" height="6"><path d="M.5 .5l4 4 4-4" stroke="#bdbdbd" stroke-width="1.1" fill="none"/></svg>
<div class="a" style="left:386px;top:860px;width:13px;height:13px;background:#262626"></div>
<svg class="a" style="left:386px;top:860px" width="13" height="13"><path d="M2.3 8 Q2.3 2.3 6.5 2.3 Q10.7 2.3 10.7 8z" fill="#bdbdbd"/><circle cx="4.7" cy="6" r="1" fill="#262626"/><circle cx="8.3" cy="6" r="1" fill="#262626"/><path d="M.5 9.5h12" stroke="#bdbdbd" stroke-width="1"/><path d="M6.5 8v4.5" stroke="#bdbdbd" stroke-width="1.8"/></svg>
<div class="a" style="left:416px;top:860px;width:13px;height:13px;background:#262626"></div>
<svg class="a" style="left:416px;top:860px" width="13" height="13"><path d="M1.5 11.5 L11.5 1.5" stroke="#bdbdbd" stroke-width="1.3"/></svg>
<div class="a" style="left:461px;top:860px;width:13px;height:13px;background:#262626"></div>
<div class="a" style="left:476px;top:860px;width:13px;height:13px;background:#262626"></div>
<div class="a" style="left:491px;top:860px;width:13px;height:13px;background:#262626"></div>
<div class="a" style="left:2px;top:876px;width:532px;height:16px;background:#2f2f2f"></div>
<div class="a" style="left:2px;top:892px;width:532px;height:1px;background:#262626"></div>
<div class="a" style="left:535px;top:876px;width:1366px;height:16px;background:#3a3a3a"></div>
<div class="a" style="left:535px;top:876px;width:6px;height:16px;background:#333"></div>
<div class="a" style="left:1894px;top:876px;width:7px;height:16px;background:#2e2e2e"></div>
<div class="a" style="left:535px;top:892px;width:1366px;height:1px;background:#262626"></div>
<div class="a" style="left:977px;top:876px;width:917px;height:16px;background:#767488"></div>
<div class="a" style="left:6px;top:877px;width:13px;height:13px;background:#262626"></div>
<div class="a" style="left:36px;top:877px;width:13px;height:13px;background:#262626"></div>
<div class="a" style="left:51px;top:877px;width:13px;height:13px;background:#262626"></div>
<svg class="a" style="left:6px;top:877px" width="13" height="13"><path d="M1.3 6.8 Q6.5 0.3 11.7 6.8 Q6.5 13.3 1.3 6.8z" fill="#c4c4c4"/><circle cx="6.5" cy="6.6" r="2.3" fill="#2a2a2a"/><circle cx="6.3" cy="6.3" r=".8" fill="#777"/></svg>
<svg class="a" style="left:75px;top:880px" width="6" height="9"><path d="M1 .5 L4.5 4.5 L1 8.5" stroke="#bdbdbd" stroke-width="1" fill="none"/></svg>
<div class="a" style="left:87px;top:878px;width:12px;height:12px;background:#a9a8cc"></div>
<div class="t" style="left:108px;top:876px;color:#c8c8c8">13</div>
<svg class="a" style="left:139px;top:878px" width="11" height="13"><path d="M.5 .5h7.5l2.5 2.5v9.5h-10z" fill="#001820" stroke="#2598c2" stroke-width=".9"/><text x="1.8" y="7.3" font-family="Liberation Sans" font-size="6.5" font-weight="bold" fill="#d8e4e8">Ps</text><path d="M2.7 10.3h4.5" stroke="#c8d0d0" stroke-width="1.6"/></svg>
<div class="t" style="left:157px;top:877px;color:#c8c8c8">I</div>
<svg class="a" style="left:269px;top:878px" width="13" height="12"><path d="M5.40 5.50 L5.32 5.62 L5.27 5.76 L5.25 5.92 L5.26 6.10 L5.32 6.28 L5.41 6.45 L5.55 6.62 L5.73 6.77 L5.95 6.88 L6.19 6.95 L6.46 6.98 L6.74 6.96 L7.03 6.88 L7.32 6.75 L7.58 6.56 L7.81 6.31 L8.01 6.01 L8.15 5.67 L8.24 5.29 L8.25 4.90 L8.20 4.49 L8.07 4.08 L7.86 3.69 L7.58 3.33 L7.22 3.02 L6.81 2.76 L6.35 2.58 L5.84 2.48 L5.31 2.46 L4.78 2.54 L4.25 2.72 L3.74 2.99 L3.28 3.36 L2.88 3.81 L2.56 4.33 L2.33 4.92 L2.19 5.55 L2.17 6.21 L2.27 6.88 L2.48 7.53 L2.81 8.16 L3.25 8.72 L3.79 9.22 L4.42 9.62 L5.12 9.91 L5.88 10.09 L6.67 10.12 L7.47 10.03 L8.26 9.79 L9.00 9.41 L9.69 8.91 L10.28 8.28 L10.77 7.55 L11.13 6.73 L11.36 5.85 L11.42 4.93 L11.33 4.00 L11.08 3.08 L10.67 2.20 L10.10 1.40" stroke="#bdbdbd" stroke-width="1.1" fill="none"/></svg>
<div class="a" style="left:288px;top:877px;width:89px;height:14px;background:#1c1c1c"></div>
<div class="t" style="left:295px;top:877px;color:#c8c8c8">None</div>
<svg class="a" style="left:364px;top:881px" width="9" height="6"><path d="M.5 .5l4 4 4-4" stroke="#bdbdbd" stroke-width="1.1" fill="none"/></svg>
<div class="a" style="left:386px;top:877px;width:13px;height:13px;background:#262626"></div>
<svg class="a" style="left:386px;top:877px" width="13" height="13"><path d="M2.3 8 Q2.3 2.3 6.5 2.3 Q10.7 2.3 10.7 8z" fill="#bdbdbd"/><circle cx="4.7" cy="6" r="1" fill="#262626"/><circle cx="8.3" cy="6" r="1" fill="#262626"/><path d="M.5 9.5h12" stroke="#bdbdbd" stroke-width="1"/><path d="M6.5 8v4.5" stroke="#bdbdbd" stroke-width="1.8"/></svg>
<div class="a" style="left:416px;top:877px;width:13px;height:13px;background:#262626"></div>
<svg class="a" style="left:416px;top:877px" width="13" height="13"><path d="M1.5 11.5 L11.5 1.5" stroke="#bdbdbd" stroke-width="1.3"/></svg>
<div class="a" style="left:461px;top:877px;width:13px;height:13px;background:#262626"></div>
<div class="a" style="left:476px;top:877px;width:13px;height:13px;background:#262626"></div>
<div class="a" style="left:491px;top:877px;width:13px;height:13px;background:#262626"></div>
<div class="a" style="left:2px;top:893px;width:532px;height:16px;background:#2f2f2f"></div>
<div class="a" style="left:2px;top:909px;width:532px;height:1px;background:#262626"></div>
<div class="a" style="left:535px;top:893px;width:1366px;height:16px;background:#3a3a3a"></div>
<div class="a" style="left:535px;top:893px;width:6px;height:16px;background:#333"></div>
<div class="a" style="left:1894px;top:893px;width:7px;height:16px;background:#2e2e2e"></div>
<div class="a" style="left:535px;top:909px;width:1366px;height:1px;background:#262626"></div>
<div class="a" style="left:551px;top:893px;width:9px;height:16px;background:#767488"></div>
<div class="a" style="left:6px;top:894px;width:13px;height:13px;background:#262626"></div>
<div class="a" style="left:36px;top:894px;width:13px;height:13px;background:#262626"></div>
<div class="a" style="left:51px;top:894px;width:13px;height:13px;background:#262626"></div>
<svg class="a" style="left:6px;top:894px" width="13" height="13"><path d="M1.3 6.8 Q6.5 0.3 11.7 6.8 Q6.5 13.3 1.3 6.8z" fill="#c4c4c4"/><circle cx="6.5" cy="6.6" r="2.3" fill="#2a2a2a"/><circle cx="6.3" cy="6.3" r=".8" fill="#777"/></svg>
<svg class="a" style="left:75px;top:897px" width="6" height="9"><path d="M1 .5 L4.5 4.5 L1 8.5" stroke="#bdbdbd" stroke-width="1" fill="none"/></svg>
<div class="a" style="left:87px;top:895px;width:12px;height:12px;background:#a9a8cc"></div>
<div class="t" style="left:108px;top:893px;color:#c8c8c8">14</div>
<svg class="a" style="left:139px;top:895px" width="10" height="12"><path d="M.5 0h6.5l2.5 2.5V12h-9z" fill="#f4f4f4"/><rect x="1.5" y="3.5" width="6.5" height="6.5" fill="#1aa8f0"/><path d="M1.5 10 V7.5 L3.5 5.3 L5.2 7 L8 4 V10z" fill="#0d3f92"/></svg>
<div class="t" style="left:157px;top:894px;color:#c8c8c8">[Banner...d V2.png]</div>
<svg class="a" style="left:269px;top:895px" width="13" height="12"><path d="M5.40 5.50 L5.32 5.62 L5.27 5.76 L5.25 5.92 L5.26 6.10 L5.32 6.28 L5.41 6.45 L5.55 6.62 L5.73 6.77 L5.95 6.88 L6.19 6.95 L6.46 6.98 L6.74 6.96 L7.03 6.88 L7.32 6.75 L7.58 6.56 L7.81 6.31 L8.01 6.01 L8.15 5.67 L8.24 5.29 L8.25 4.90 L8.20 4.49 L8.07 4.08 L7.86 3.69 L7.58 3.33 L7.22 3.02 L6.81 2.76 L6.35 2.58 L5.84 2.48 L5.31 2.46 L4.78 2.54 L4.25 2.72 L3.74 2.99 L3.28 3.36 L2.88 3.81 L2.56 4.33 L2.33 4.92 L2.19 5.55 L2.17 6.21 L2.27 6.88 L2.48 7.53 L2.81 8.16 L3.25 8.72 L3.79 9.22 L4.42 9.62 L5.12 9.91 L5.88 10.09 L6.67 10.12 L7.47 10.03 L8.26 9.79 L9.00 9.41 L9.69 8.91 L10.28 8.28 L10.77 7.55 L11.13 6.73 L11.36 5.85 L11.42 4.93 L11.33 4.00 L11.08 3.08 L10.67 2.20 L10.10 1.40" stroke="#bdbdbd" stroke-width="1.1" fill="none"/></svg>
<div class="a" style="left:288px;top:894px;width:89px;height:14px;background:#1c1c1c"></div>
<div class="t" style="left:295px;top:894px;color:#c8c8c8">None</div>
<svg class="a" style="left:364px;top:898px" width="9" height="6"><path d="M.5 .5l4 4 4-4" stroke="#bdbdbd" stroke-width="1.1" fill="none"/></svg>
<div class="a" style="left:386px;top:894px;width:13px;height:13px;background:#262626"></div>
<svg class="a" style="left:386px;top:894px" width="13" height="13"><path d="M2.3 8 Q2.3 2.3 6.5 2.3 Q10.7 2.3 10.7 8z" fill="#bdbdbd"/><circle cx="4.7" cy="6" r="1" fill="#262626"/><circle cx="8.3" cy="6" r="1" fill="#262626"/><path d="M.5 9.5h12" stroke="#bdbdbd" stroke-width="1"/><path d="M6.5 8v4.5" stroke="#bdbdbd" stroke-width="1.8"/></svg>
<div class="a" style="left:416px;top:894px;width:13px;height:13px;background:#262626"></div>
<svg class="a" style="left:416px;top:894px" width="13" height="13"><path d="M1.5 11.5 L11.5 1.5" stroke="#bdbdbd" stroke-width="1.3"/></svg>
<div class="a" style="left:461px;top:894px;width:13px;height:13px;background:#262626"></div>
<div class="a" style="left:476px;top:894px;width:13px;height:13px;background:#262626"></div>
<div class="a" style="left:491px;top:894px;width:13px;height:13px;background:#262626"></div>
<div class="a" style="left:2px;top:910px;width:532px;height:16px;background:#2f2f2f"></div>
<div class="a" style="left:2px;top:926px;width:532px;height:1px;background:#262626"></div>
<div class="a" style="left:535px;top:910px;width:1366px;height:16px;background:#3a3a3a"></div>
<div class="a" style="left:535px;top:910px;width:6px;height:16px;background:#333"></div>
<div class="a" style="left:1894px;top:910px;width:7px;height:16px;background:#2e2e2e"></div>
<div class="a" style="left:535px;top:926px;width:1366px;height:1px;background:#262626"></div>
<div class="a" style="left:560px;top:910px;width:9px;height:16px;background:#767488"></div>
<div class="a" style="left:6px;top:911px;width:13px;height:13px;background:#262626"></div>
<div class="a" style="left:36px;top:911px;width:13px;height:13px;background:#262626"></div>
<div class="a" style="left:51px;top:911px;width:13px;height:13px;background:#262626"></div>
<svg class="a" style="left:6px;top:911px" width="13" height="13"><path d="M1.3 6.8 Q6.5 0.3 11.7 6.8 Q6.5 13.3 1.3 6.8z" fill="#c4c4c4"/><circle cx="6.5" cy="6.6" r="2.3" fill="#2a2a2a"/><circle cx="6.3" cy="6.3" r=".8" fill="#777"/></svg>
<svg class="a" style="left:75px;top:914px" width="6" height="9"><path d="M1 .5 L4.5 4.5 L1 8.5" stroke="#bdbdbd" stroke-width="1" fill="none"/></svg>
<div class="a" style="left:87px;top:912px;width:12px;height:12px;background:#a9a8cc"></div>
<div class="t" style="left:108px;top:910px;color:#c8c8c8">15</div>
<svg class="a" style="left:139px;top:912px" width="10" height="12"><path d="M.5 0h6.5l2.5 2.5V12h-9z" fill="#f4f4f4"/><rect x="1.5" y="3.5" width="6.5" height="6.5" fill="#1aa8f0"/><path d="M1.5 10 V7.5 L3.5 5.3 L5.2 7 L8 4 V10z" fill="#0d3f92"/></svg>
<div class="t" style="left:157px;top:911px;color:#c8c8c8">[2.png]</div>
<svg class="a" style="left:269px;top:912px" width="13" height="12"><path d="M5.40 5.50 L5.32 5.62 L5.27 5.76 L5.25 5.92 L5.26 6.10 L5.32 6.28 L5.41 6.45 L5.55 6.62 L5.73 6.77 L5.95 6.88 L6.19 6.95 L6.46 6.98 L6.74 6.96 L7.03 6.88 L7.32 6.75 L7.58 6.56 L7.81 6.31 L8.01 6.01 L8.15 5.67 L8.24 5.29 L8.25 4.90 L8.20 4.49 L8.07 4.08 L7.86 3.69 L7.58 3.33 L7.22 3.02 L6.81 2.76 L6.35 2.58 L5.84 2.48 L5.31 2.46 L4.78 2.54 L4.25 2.72 L3.74 2.99 L3.28 3.36 L2.88 3.81 L2.56 4.33 L2.33 4.92 L2.19 5.55 L2.17 6.21 L2.27 6.88 L2.48 7.53 L2.81 8.16 L3.25 8.72 L3.79 9.22 L4.42 9.62 L5.12 9.91 L5.88 10.09 L6.67 10.12 L7.47 10.03 L8.26 9.79 L9.00 9.41 L9.69 8.91 L10.28 8.28 L10.77 7.55 L11.13 6.73 L11.36 5.85 L11.42 4.93 L11.33 4.00 L11.08 3.08 L10.67 2.20 L10.10 1.40" stroke="#bdbdbd" stroke-width="1.1" fill="none"/></svg>
<div class="a" style="left:288px;top:911px;width:89px;height:14px;background:#1c1c1c"></div>
<div class="t" style="left:295px;top:911px;color:#c8c8c8">None</div>
<svg class="a" style="left:364px;top:915px" width="9" height="6"><path d="M.5 .5l4 4 4-4" stroke="#bdbdbd" stroke-width="1.1" fill="none"/></svg>
<div class="a" style="left:386px;top:911px;width:13px;height:13px;background:#262626"></div>
<svg class="a" style="left:386px;top:911px" width="13" height="13"><path d="M2.3 8 Q2.3 2.3 6.5 2.3 Q10.7 2.3 10.7 8z" fill="#bdbdbd"/><circle cx="4.7" cy="6" r="1" fill="#262626"/><circle cx="8.3" cy="6" r="1" fill="#262626"/><path d="M.5 9.5h12" stroke="#bdbdbd" stroke-width="1"/><path d="M6.5 8v4.5" stroke="#bdbdbd" stroke-width="1.8"/></svg>
<div class="a" style="left:416px;top:911px;width:13px;height:13px;background:#262626"></div>
<svg class="a" style="left:416px;top:911px" width="13" height="13"><path d="M1.5 11.5 L11.5 1.5" stroke="#bdbdbd" stroke-width="1.3"/></svg>
<div class="a" style="left:461px;top:911px;width:13px;height:13px;background:#262626"></div>
<div class="a" style="left:476px;top:911px;width:13px;height:13px;background:#262626"></div>
<div class="a" style="left:491px;top:911px;width:13px;height:13px;background:#262626"></div>
<div class="a" style="left:2px;top:927px;width:532px;height:16px;background:#2f2f2f"></div>
<div class="a" style="left:2px;top:943px;width:532px;height:1px;background:#262626"></div>
<div class="a" style="left:535px;top:927px;width:1366px;height:16px;background:#3a3a3a"></div>
<div class="a" style="left:535px;top:927px;width:6px;height:16px;background:#333"></div>
<div class="a" style="left:1894px;top:927px;width:7px;height:16px;background:#2e2e2e"></div>
<div class="a" style="left:535px;top:943px;width:1366px;height:1px;background:#262626"></div>
<div class="a" style="left:569px;top:927px;width:9px;height:16px;background:#767488"></div>
<div class="a" style="left:6px;top:928px;width:13px;height:13px;background:#262626"></div>
<div class="a" style="left:36px;top:928px;width:13px;height:13px;background:#262626"></div>
<div class="a" style="left:51px;top:928px;width:13px;height:13px;background:#262626"></div>
<svg class="a" style="left:6px;top:928px" width="13" height="13"><path d="M1.3 6.8 Q6.5 0.3 11.7 6.8 Q6.5 13.3 1.3 6.8z" fill="#c4c4c4"/><circle cx="6.5" cy="6.6" r="2.3" fill="#2a2a2a"/><circle cx="6.3" cy="6.3" r=".8" fill="#777"/></svg>
<svg class="a" style="left:75px;top:931px" width="6" height="9"><path d="M1 .5 L4.5 4.5 L1 8.5" stroke="#bdbdbd" stroke-width="1" fill="none"/></svg>
<div class="a" style="left:87px;top:929px;width:12px;height:12px;background:#a9a8cc"></div>
<div class="t" style="left:108px;top:927px;color:#c8c8c8">16</div>
<svg class="a" style="left:139px;top:929px" width="10" height="12"><path d="M.5 0h6.5l2.5 2.5V12h-9z" fill="#f4f4f4"/><rect x="1.5" y="3.5" width="6.5" height="6.5" fill="#1aa8f0"/><path d="M1.5 10 V7.5 L3.5 5.3 L5.2 7 L8 4 V10z" fill="#0d3f92"/></svg>
<div class="t" style="left:157px;top:928px;color:#c8c8c8">[3.png]</div>
<svg class="a" style="left:269px;top:929px" width="13" height="12"><path d="M5.40 5.50 L5.32 5.62 L5.27 5.76 L5.25 5.92 L5.26 6.10 L5.32 6.28 L5.41 6.45 L5.55 6.62 L5.73 6.77 L5.95 6.88 L6.19 6.95 L6.46 6.98 L6.74 6.96 L7.03 6.88 L7.32 6.75 L7.58 6.56 L7.81 6.31 L8.01 6.01 L8.15 5.67 L8.24 5.29 L8.25 4.90 L8.20 4.49 L8.07 4.08 L7.86 3.69 L7.58 3.33 L7.22 3.02 L6.81 2.76 L6.35 2.58 L5.84 2.48 L5.31 2.46 L4.78 2.54 L4.25 2.72 L3.74 2.99 L3.28 3.36 L2.88 3.81 L2.56 4.33 L2.33 4.92 L2.19 5.55 L2.17 6.21 L2.27 6.88 L2.48 7.53 L2.81 8.16 L3.25 8.72 L3.79 9.22 L4.42 9.62 L5.12 9.91 L5.88 10.09 L6.67 10.12 L7.47 10.03 L8.26 9.79 L9.00 9.41 L9.69 8.91 L10.28 8.28 L10.77 7.55 L11.13 6.73 L11.36 5.85 L11.42 4.93 L11.33 4.00 L11.08 3.08 L10.67 2.20 L10.10 1.40" stroke="#bdbdbd" stroke-width="1.1" fill="none"/></svg>
<div class="a" style="left:288px;top:928px;width:89px;height:14px;background:#1c1c1c"></div>
<div class="t" style="left:295px;top:928px;color:#c8c8c8">None</div>
<svg class="a" style="left:364px;top:932px" width="9" height="6"><path d="M.5 .5l4 4 4-4" stroke="#bdbdbd" stroke-width="1.1" fill="none"/></svg>
<div class="a" style="left:386px;top:928px;width:13px;height:13px;background:#262626"></div>
<svg class="a" style="left:386px;top:928px" width="13" height="13"><path d="M2.3 8 Q2.3 2.3 6.5 2.3 Q10.7 2.3 10.7 8z" fill="#bdbdbd"/><circle cx="4.7" cy="6" r="1" fill="#262626"/><circle cx="8.3" cy="6" r="1" fill="#262626"/><path d="M.5 9.5h12" stroke="#bdbdbd" stroke-width="1"/><path d="M6.5 8v4.5" stroke="#bdbdbd" stroke-width="1.8"/></svg>
<div class="a" style="left:416px;top:928px;width:13px;height:13px;background:#262626"></div>
<svg class="a" style="left:416px;top:928px" width="13" height="13"><path d="M1.5 11.5 L11.5 1.5" stroke="#bdbdbd" stroke-width="1.3"/></svg>
<div class="a" style="left:461px;top:928px;width:13px;height:13px;background:#262626"></div>
<div class="a" style="left:476px;top:928px;width:13px;height:13px;background:#262626"></div>
<div class="a" style="left:491px;top:928px;width:13px;height:13px;background:#262626"></div>
<div class="a" style="left:2px;top:944px;width:532px;height:16px;background:#2f2f2f"></div>
<div class="a" style="left:2px;top:960px;width:532px;height:1px;background:#262626"></div>
<div class="a" style="left:535px;top:944px;width:1366px;height:16px;background:#3a3a3a"></div>
<div class="a" style="left:535px;top:944px;width:6px;height:16px;background:#333"></div>
<div class="a" style="left:1894px;top:944px;width:7px;height:16px;background:#2e2e2e"></div>
<div class="a" style="left:535px;top:960px;width:1366px;height:1px;background:#262626"></div>
<div class="a" style="left:578px;top:944px;width:9px;height:16px;background:#767488"></div>
<div class="a" style="left:6px;top:945px;width:13px;height:13px;background:#262626"></div>
<div class="a" style="left:36px;top:945px;width:13px;height:13px;background:#262626"></div>
<div class="a" style="left:51px;top:945px;width:13px;height:13px;background:#262626"></div>
<svg class="a" style="left:6px;top:945px" width="13" height="13"><path d="M1.3 6.8 Q6.5 0.3 11.7 6.8 Q6.5 13.3 1.3 6.8z" fill="#c4c4c4"/><circle cx="6.5" cy="6.6" r="2.3" fill="#2a2a2a"/><circle cx="6.3" cy="6.3" r=".8" fill="#777"/></svg>
<svg class="a" style="left:75px;top:948px" width="6" height="9"><path d="M1 .5 L4.5 4.5 L1 8.5" stroke="#bdbdbd" stroke-width="1" fill="none"/></svg>
<div class="a" style="left:87px;top:946px;width:12px;height:12px;background:#a9a8cc"></div>
<div class="t" style="left:108px;top:944px;color:#c8c8c8">17</div>
<svg class="a" style="left:139px;top:946px" width="10" height="12"><path d="M.5 0h6.5l2.5 2.5V12h-9z" fill="#f4f4f4"/><rect x="1.5" y="3.5" width="6.5" height="6.5" fill="#1aa8f0"/><path d="M1.5 10 V7.5 L3.5 5.3 L5.2 7 L8 4 V10z" fill="#0d3f92"/></svg>
<div class="t" style="left:157px;top:945px;color:#c8c8c8">[4.png]</div>
<svg class="a" style="left:269px;top:946px" width="13" height="12"><path d="M5.40 5.50 L5.32 5.62 L5.27 5.76 L5.25 5.92 L5.26 6.10 L5.32 6.28 L5.41 6.45 L5.55 6.62 L5.73 6.77 L5.95 6.88 L6.19 6.95 L6.46 6.98 L6.74 6.96 L7.03 6.88 L7.32 6.75 L7.58 6.56 L7.81 6.31 L8.01 6.01 L8.15 5.67 L8.24 5.29 L8.25 4.90 L8.20 4.49 L8.07 4.08 L7.86 3.69 L7.58 3.33 L7.22 3.02 L6.81 2.76 L6.35 2.58 L5.84 2.48 L5.31 2.46 L4.78 2.54 L4.25 2.72 L3.74 2.99 L3.28 3.36 L2.88 3.81 L2.56 4.33 L2.33 4.92 L2.19 5.55 L2.17 6.21 L2.27 6.88 L2.48 7.53 L2.81 8.16 L3.25 8.72 L3.79 9.22 L4.42 9.62 L5.12 9.91 L5.88 10.09 L6.67 10.12 L7.47 10.03 L8.26 9.79 L9.00 9.41 L9.69 8.91 L10.28 8.28 L10.77 7.55 L11.13 6.73 L11.36 5.85 L11.42 4.93 L11.33 4.00 L11.08 3.08 L10.67 2.20 L10.10 1.40" stroke="#bdbdbd" stroke-width="1.1" fill="none"/></svg>
<div class="a" style="left:288px;top:945px;width:89px;height:14px;background:#1c1c1c"></div>
<div class="t" style="left:295px;top:945px;color:#c8c8c8">None</div>
<svg class="a" style="left:364px;top:949px" width="9" height="6"><path d="M.5 .5l4 4 4-4" stroke="#bdbdbd" stroke-width="1.1" fill="none"/></svg>
<div class="a" style="left:386px;top:945px;width:13px;height:13px;background:#262626"></div>
<svg class="a" style="left:386px;top:945px" width="13" height="13"><path d="M2.3 8 Q2.3 2.3 6.5 2.3 Q10.7 2.3 10.7 8z" fill="#bdbdbd"/><circle cx="4.7" cy="6" r="1" fill="#262626"/><circle cx="8.3" cy="6" r="1" fill="#262626"/><path d="M.5 9.5h12" stroke="#bdbdbd" stroke-width="1"/><path d="M6.5 8v4.5" stroke="#bdbdbd" stroke-width="1.8"/></svg>
<div class="a" style="left:416px;top:945px;width:13px;height:13px;background:#262626"></div>
<svg class="a" style="left:416px;top:945px" width="13" height="13"><path d="M1.5 11.5 L11.5 1.5" stroke="#bdbdbd" stroke-width="1.3"/></svg>
<div class="a" style="left:461px;top:945px;width:13px;height:13px;background:#262626"></div>
<div class="a" style="left:476px;top:945px;width:13px;height:13px;background:#262626"></div>
<div class="a" style="left:491px;top:945px;width:13px;height:13px;background:#262626"></div>
<div class="a" style="left:2px;top:961px;width:532px;height:16px;background:#2f2f2f"></div>
<div class="a" style="left:2px;top:977px;width:532px;height:1px;background:#262626"></div>
<div class="a" style="left:535px;top:961px;width:1366px;height:16px;background:#3a3a3a"></div>
<div class="a" style="left:535px;top:961px;width:6px;height:16px;background:#333"></div>
<div class="a" style="left:1894px;top:961px;width:7px;height:16px;background:#2e2e2e"></div>
<div class="a" style="left:535px;top:977px;width:1366px;height:1px;background:#262626"></div>
<div class="a" style="left:587px;top:961px;width:9px;height:16px;background:#767488"></div>
<div class="a" style="left:6px;top:962px;width:13px;height:13px;background:#262626"></div>
<div class="a" style="left:36px;top:962px;width:13px;height:13px;background:#262626"></div>
<div class="a" style="left:51px;top:962px;width:13px;height:13px;background:#262626"></div>
<svg class="a" style="left:6px;top:962px" width="13" height="13"><path d="M1.3 6.8 Q6.5 0.3 11.7 6.8 Q6.5 13.3 1.3 6.8z" fill="#c4c4c4"/><circle cx="6.5" cy="6.6" r="2.3" fill="#2a2a2a"/><circle cx="6.3" cy="6.3" r=".8" fill="#777"/></svg>
<svg class="a" style="left:75px;top:965px" width="6" height="9"><path d="M1 .5 L4.5 4.5 L1 8.5" stroke="#bdbdbd" stroke-width="1" fill="none"/></svg>
<div class="a" style="left:87px;top:963px;width:12px;height:12px;background:#a9a8cc"></div>
<div class="t" style="left:108px;top:961px;color:#c8c8c8">18</div>
<svg class="a" style="left:139px;top:963px" width="10" height="12"><path d="M.5 0h6.5l2.5 2.5V12h-9z" fill="#f4f4f4"/><rect x="1.5" y="3.5" width="6.5" height="6.5" fill="#1aa8f0"/><path d="M1.5 10 V7.5 L3.5 5.3 L5.2 7 L8 4 V10z" fill="#0d3f92"/></svg>
<div class="t" style="left:157px;top:962px;color:#c8c8c8">[5.png]</div>
<svg class="a" style="left:269px;top:963px" width="13" height="12"><path d="M5.40 5.50 L5.32 5.62 L5.27 5.76 L5.25 5.92 L5.26 6.10 L5.32 6.28 L5.41 6.45 L5.55 6.62 L5.73 6.77 L5.95 6.88 L6.19 6.95 L6.46 6.98 L6.74 6.96 L7.03 6.88 L7.32 6.75 L7.58 6.56 L7.81 6.31 L8.01 6.01 L8.15 5.67 L8.24 5.29 L8.25 4.90 L8.20 4.49 L8.07 4.08 L7.86 3.69 L7.58 3.33 L7.22 3.02 L6.81 2.76 L6.35 2.58 L5.84 2.48 L5.31 2.46 L4.78 2.54 L4.25 2.72 L3.74 2.99 L3.28 3.36 L2.88 3.81 L2.56 4.33 L2.33 4.92 L2.19 5.55 L2.17 6.21 L2.27 6.88 L2.48 7.53 L2.81 8.16 L3.25 8.72 L3.79 9.22 L4.42 9.62 L5.12 9.91 L5.88 10.09 L6.67 10.12 L7.47 10.03 L8.26 9.79 L9.00 9.41 L9.69 8.91 L10.28 8.28 L10.77 7.55 L11.13 6.73 L11.36 5.85 L11.42 4.93 L11.33 4.00 L11.08 3.08 L10.67 2.20 L10.10 1.40" stroke="#bdbdbd" stroke-width="1.1" fill="none"/></svg>
<div class="a" style="left:288px;top:962px;width:89px;height:14px;background:#1c1c1c"></div>
<div class="t" style="left:295px;top:962px;color:#c8c8c8">None</div>
<svg class="a" style="left:364px;top:966px" width="9" height="6"><path d="M.5 .5l4 4 4-4" stroke="#bdbdbd" stroke-width="1.1" fill="none"/></svg>
<div class="a" style="left:386px;top:962px;width:13px;height:13px;background:#262626"></div>
<svg class="a" style="left:386px;top:962px" width="13" height="13"><path d="M2.3 8 Q2.3 2.3 6.5 2.3 Q10.7 2.3 10.7 8z" fill="#bdbdbd"/><circle cx="4.7" cy="6" r="1" fill="#262626"/><circle cx="8.3" cy="6" r="1" fill="#262626"/><path d="M.5 9.5h12" stroke="#bdbdbd" stroke-width="1"/><path d="M6.5 8v4.5" stroke="#bdbdbd" stroke-width="1.8"/></svg>
<div class="a" style="left:416px;top:962px;width:13px;height:13px;background:#262626"></div>
<svg class="a" style="left:416px;top:962px" width="13" height="13"><path d="M1.5 11.5 L11.5 1.5" stroke="#bdbdbd" stroke-width="1.3"/></svg>
<div class="a" style="left:461px;top:962px;width:13px;height:13px;background:#262626"></div>
<div class="a" style="left:476px;top:962px;width:13px;height:13px;background:#262626"></div>
<div class="a" style="left:491px;top:962px;width:13px;height:13px;background:#262626"></div>
<div class="a" style="left:2px;top:978px;width:532px;height:16px;background:#2f2f2f"></div>
<div class="a" style="left:2px;top:994px;width:532px;height:1px;background:#262626"></div>
<div class="a" style="left:535px;top:978px;width:1366px;height:16px;background:#3a3a3a"></div>
<div class="a" style="left:535px;top:978px;width:6px;height:16px;background:#333"></div>
<div class="a" style="left:1894px;top:978px;width:7px;height:16px;background:#2e2e2e"></div>
<div class="a" style="left:535px;top:994px;width:1366px;height:1px;background:#262626"></div>
<div class="a" style="left:596px;top:978px;width:9px;height:16px;background:#767488"></div>
<div class="a" style="left:6px;top:979px;width:13px;height:13px;background:#262626"></div>
<div class="a" style="left:36px;top:979px;width:13px;height:13px;background:#262626"></div>
<div class="a" style="left:51px;top:979px;width:13px;height:13px;background:#262626"></div>
<svg class="a" style="left:6px;top:979px" width="13" height="13"><path d="M1.3 6.8 Q6.5 0.3 11.7 6.8 Q6.5 13.3 1.3 6.8z" fill="#c4c4c4"/><circle cx="6.5" cy="6.6" r="2.3" fill="#2a2a2a"/><circle cx="6.3" cy="6.3" r=".8" fill="#777"/></svg>
<svg class="a" style="left:75px;top:982px" width="6" height="9"><path d="M1 .5 L4.5 4.5 L1 8.5" stroke="#bdbdbd" stroke-width="1" fill="none"/></svg>
<div class="a" style="left:87px;top:980px;width:12px;height:12px;background:#a9a8cc"></div>
<div class="t" style="left:108px;top:978px;color:#c8c8c8">19</div>
<svg class="a" style="left:139px;top:980px" width="10" height="12"><path d="M.5 0h6.5l2.5 2.5V12h-9z" fill="#f4f4f4"/><rect x="1.5" y="3.5" width="6.5" height="6.5" fill="#1aa8f0"/><path d="M1.5 10 V7.5 L3.5 5.3 L5.2 7 L8 4 V10z" fill="#0d3f92"/></svg>
<div class="t" style="left:157px;top:979px;color:#c8c8c8">[6.png]</div>
<svg class="a" style="left:269px;top:980px" width="13" height="12"><path d="M5.40 5.50 L5.32 5.62 L5.27 5.76 L5.25 5.92 L5.26 6.10 L5.32 6.28 L5.41 6.45 L5.55 6.62 L5.73 6.77 L5.95 6.88 L6.19 6.95 L6.46 6.98 L6.74 6.96 L7.03 6.88 L7.32 6.75 L7.58 6.56 L7.81 6.31 L8.01 6.01 L8.15 5.67 L8.24 5.29 L8.25 4.90 L8.20 4.49 L8.07 4.08 L7.86 3.69 L7.58 3.33 L7.22 3.02 L6.81 2.76 L6.35 2.58 L5.84 2.48 L5.31 2.46 L4.78 2.54 L4.25 2.72 L3.74 2.99 L3.28 3.36 L2.88 3.81 L2.56 4.33 L2.33 4.92 L2.19 5.55 L2.17 6.21 L2.27 6.88 L2.48 7.53 L2.81 8.16 L3.25 8.72 L3.79 9.22 L4.42 9.62 L5.12 9.91 L5.88 10.09 L6.67 10.12 L7.47 10.03 L8.26 9.79 L9.00 9.41 L9.69 8.91 L10.28 8.28 L10.77 7.55 L11.13 6.73 L11.36 5.85 L11.42 4.93 L11.33 4.00 L11.08 3.08 L10.67 2.20 L10.10 1.40" stroke="#bdbdbd" stroke-width="1.1" fill="none"/></svg>
<div class="a" style="left:288px;top:979px;width:89px;height:14px;background:#1c1c1c"></div>
<div class="t" style="left:295px;top:979px;color:#c8c8c8">None</div>
<svg class="a" style="left:364px;top:983px" width="9" height="6"><path d="M.5 .5l4 4 4-4" stroke="#bdbdbd" stroke-width="1.1" fill="none"/></svg>
<div class="a" style="left:386px;top:979px;width:13px;height:13px;background:#262626"></div>
<svg class="a" style="left:386px;top:979px" width="13" height="13"><path d="M2.3 8 Q2.3 2.3 6.5 2.3 Q10.7 2.3 10.7 8z" fill="#bdbdbd"/><circle cx="4.7" cy="6" r="1" fill="#262626"/><circle cx="8.3" cy="6" r="1" fill="#262626"/><path d="M.5 9.5h12" stroke="#bdbdbd" stroke-width="1"/><path d="M6.5 8v4.5" stroke="#bdbdbd" stroke-width="1.8"/></svg>
<div class="a" style="left:416px;top:979px;width:13px;height:13px;background:#262626"></div>
<svg class="a" style="left:416px;top:979px" width="13" height="13"><path d="M1.5 11.5 L11.5 1.5" stroke="#bdbdbd" stroke-width="1.3"/></svg>
<div class="a" style="left:461px;top:979px;width:13px;height:13px;background:#262626"></div>
<div class="a" style="left:476px;top:979px;width:13px;height:13px;background:#262626"></div>
<div class="a" style="left:491px;top:979px;width:13px;height:13px;background:#262626"></div>
<div class="a" style="left:2px;top:995px;width:532px;height:16px;background:#2f2f2f"></div>
<div class="a" style="left:2px;top:1011px;width:532px;height:1px;background:#262626"></div>
<div class="a" style="left:535px;top:995px;width:1366px;height:16px;background:#3a3a3a"></div>
<div class="a" style="left:535px;top:995px;width:6px;height:16px;background:#333"></div>
<div class="a" style="left:1894px;top:995px;width:7px;height:16px;background:#2e2e2e"></div>
<div class="a" style="left:535px;top:1011px;width:1366px;height:1px;background:#262626"></div>
<div class="a" style="left:605px;top:995px;width:9px;height:16px;background:#767488"></div>
<div class="a" style="left:6px;top:996px;width:13px;height:13px;background:#262626"></div>
<div class="a" style="left:36px;top:996px;width:13px;height:13px;background:#262626"></div>
<div class="a" style="left:51px;top:996px;width:13px;height:13px;background:#262626"></div>
<svg class="a" style="left:6px;top:996px" width="13" height="13"><path d="M1.3 6.8 Q6.5 0.3 11.7 6.8 Q6.5 13.3 1.3 6.8z" fill="#c4c4c4"/><circle cx="6.5" cy="6.6" r="2.3" fill="#2a2a2a"/><circle cx="6.3" cy="6.3" r=".8" fill="#777"/></svg>
<svg class="a" style="left:75px;top:999px" width="6" height="9"><path d="M1 .5 L4.5 4.5 L1 8.5" stroke="#bdbdbd" stroke-width="1" fill="none"/></svg>
<div class="a" style="left:87px;top:997px;width:12px;height:12px;background:#a9a8cc"></div>
<div class="t" style="left:108px;top:995px;color:#c8c8c8">20</div>
<svg class="a" style="left:139px;top:997px" width="10" height="12"><path d="M.5 0h6.5l2.5 2.5V12h-9z" fill="#f4f4f4"/><rect x="1.5" y="3.5" width="6.5" height="6.5" fill="#1aa8f0"/><path d="M1.5 10 V7.5 L3.5 5.3 L5.2 7 L8 4 V10z" fill="#0d3f92"/></svg>
<div class="t" style="left:157px;top:996px;color:#c8c8c8">[7 new.png]</div>
<svg class="a" style="left:269px;top:997px" width="13" height="12"><path d="M5.40 5.50 L5.32 5.62 L5.27 5.76 L5.25 5.92 L5.26 6.10 L5.32 6.28 L5.41 6.45 L5.55 6.62 L5.73 6.77 L5.95 6.88 L6.19 6.95 L6.46 6.98 L6.74 6.96 L7.03 6.88 L7.32 6.75 L7.58 6.56 L7.81 6.31 L8.01 6.01 L8.15 5.67 L8.24 5.29 L8.25 4.90 L8.20 4.49 L8.07 4.08 L7.86 3.69 L7.58 3.33 L7.22 3.02 L6.81 2.76 L6.35 2.58 L5.84 2.48 L5.31 2.46 L4.78 2.54 L4.25 2.72 L3.74 2.99 L3.28 3.36 L2.88 3.81 L2.56 4.33 L2.33 4.92 L2.19 5.55 L2.17 6.21 L2.27 6.88 L2.48 7.53 L2.81 8.16 L3.25 8.72 L3.79 9.22 L4.42 9.62 L5.12 9.91 L5.88 10.09 L6.67 10.12 L7.47 10.03 L8.26 9.79 L9.00 9.41 L9.69 8.91 L10.28 8.28 L10.77 7.55 L11.13 6.73 L11.36 5.85 L11.42 4.93 L11.33 4.00 L11.08 3.08 L10.67 2.20 L10.10 1.40" stroke="#bdbdbd" stroke-width="1.1" fill="none"/></svg>
<div class="a" style="left:288px;top:996px;width:89px;height:14px;background:#1c1c1c"></div>
<div class="t" style="left:295px;top:996px;color:#c8c8c8">None</div>
<svg class="a" style="left:364px;top:1000px" width="9" height="6"><path d="M.5 .5l4 4 4-4" stroke="#bdbdbd" stroke-width="1.1" fill="none"/></svg>
<div class="a" style="left:386px;top:996px;width:13px;height:13px;background:#262626"></div>
<svg class="a" style="left:386px;top:996px" width="13" height="13"><path d="M2.3 8 Q2.3 2.3 6.5 2.3 Q10.7 2.3 10.7 8z" fill="#bdbdbd"/><circle cx="4.7" cy="6" r="1" fill="#262626"/><circle cx="8.3" cy="6" r="1" fill="#262626"/><path d="M.5 9.5h12" stroke="#bdbdbd" stroke-width="1"/><path d="M6.5 8v4.5" stroke="#bdbdbd" stroke-width="1.8"/></svg>
<div class="a" style="left:416px;top:996px;width:13px;height:13px;background:#262626"></div>
<svg class="a" style="left:416px;top:996px" width="13" height="13"><path d="M1.5 11.5 L11.5 1.5" stroke="#bdbdbd" stroke-width="1.3"/></svg>
<div class="a" style="left:461px;top:996px;width:13px;height:13px;background:#262626"></div>
<div class="a" style="left:476px;top:996px;width:13px;height:13px;background:#262626"></div>
<div class="a" style="left:491px;top:996px;width:13px;height:13px;background:#262626"></div>
<div class="a" style="left:2px;top:1012px;width:532px;height:16px;background:#2f2f2f"></div>
<div class="a" style="left:2px;top:1028px;width:532px;height:1px;background:#262626"></div>
<div class="a" style="left:535px;top:1012px;width:1366px;height:16px;background:#3a3a3a"></div>
<div class="a" style="left:535px;top:1012px;width:6px;height:16px;background:#333"></div>
<div class="a" style="left:1894px;top:1012px;width:7px;height:16px;background:#2e2e2e"></div>
<div class="a" style="left:535px;top:1028px;width:1366px;height:1px;background:#262626"></div>
<div class="a" style="left:614px;top:1012px;width:9px;height:16px;background:#767488"></div>
<div class="a" style="left:6px;top:1013px;width:13px;height:13px;background:#262626"></div>
<div class="a" style="left:36px;top:1013px;width:13px;height:13px;background:#262626"></div>
<div class="a" style="left:51px;top:1013px;width:13px;height:13px;background:#262626"></div>
<svg class="a" style="left:6px;top:1013px" width="13" height="13"><path d="M1.3 6.8 Q6.5 0.3 11.7 6.8 Q6.5 13.3 1.3 6.8z" fill="#c4c4c4"/><circle cx="6.5" cy="6.6" r="2.3" fill="#2a2a2a"/><circle cx="6.3" cy="6.3" r=".8" fill="#777"/></svg>
<svg class="a" style="left:75px;top:1016px" width="6" height="9"><path d="M1 .5 L4.5 4.5 L1 8.5" stroke="#bdbdbd" stroke-width="1" fill="none"/></svg>
<div class="a" style="left:87px;top:1014px;width:12px;height:12px;background:#a9a8cc"></div>
<div class="t" style="left:108px;top:1012px;color:#c8c8c8">21</div>
<svg class="a" style="left:139px;top:1014px" width="10" height="12"><path d="M.5 0h6.5l2.5 2.5V12h-9z" fill="#f4f4f4"/><rect x="1.5" y="3.5" width="6.5" height="6.5" fill="#1aa8f0"/><path d="M1.5 10 V7.5 L3.5 5.3 L5.2 7 L8 4 V10z" fill="#0d3f92"/></svg>
<div class="t" style="left:157px;top:1013px;color:#c8c8c8">[8.png]</div>
<svg class="a" style="left:269px;top:1014px" width="13" height="12"><path d="M5.40 5.50 L5.32 5.62 L5.27 5.76 L5.25 5.92 L5.26 6.10 L5.32 6.28 L5.41 6.45 L5.55 6.62 L5.73 6.77 L5.95 6.88 L6.19 6.95 L6.46 6.98 L6.74 6.96 L7.03 6.88 L7.32 6.75 L7.58 6.56 L7.81 6.31 L8.01 6.01 L8.15 5.67 L8.24 5.29 L8.25 4.90 L8.20 4.49 L8.07 4.08 L7.86 3.69 L7.58 3.33 L7.22 3.02 L6.81 2.76 L6.35 2.58 L5.84 2.48 L5.31 2.46 L4.78 2.54 L4.25 2.72 L3.74 2.99 L3.28 3.36 L2.88 3.81 L2.56 4.33 L2.33 4.92 L2.19 5.55 L2.17 6.21 L2.27 6.88 L2.48 7.53 L2.81 8.16 L3.25 8.72 L3.79 9.22 L4.42 9.62 L5.12 9.91 L5.88 10.09 L6.67 10.12 L7.47 10.03 L8.26 9.79 L9.00 9.41 L9.69 8.91 L10.28 8.28 L10.77 7.55 L11.13 6.73 L11.36 5.85 L11.42 4.93 L11.33 4.00 L11.08 3.08 L10.67 2.20 L10.10 1.40" stroke="#bdbdbd" stroke-width="1.1" fill="none"/></svg>
<div class="a" style="left:288px;top:1013px;width:89px;height:14px;background:#1c1c1c"></div>
<div class="t" style="left:295px;top:1013px;color:#c8c8c8">None</div>
<svg class="a" style="left:364px;top:1017px" width="9" height="6"><path d="M.5 .5l4 4 4-4" stroke="#bdbdbd" stroke-width="1.1" fill="none"/></svg>
<div class="a" style="left:386px;top:1013px;width:13px;height:13px;background:#262626"></div>
<svg class="a" style="left:386px;top:1013px" width="13" height="13"><path d="M2.3 8 Q2.3 2.3 6.5 2.3 Q10.7 2.3 10.7 8z" fill="#bdbdbd"/><circle cx="4.7" cy="6" r="1" fill="#262626"/><circle cx="8.3" cy="6" r="1" fill="#262626"/><path d="M.5 9.5h12" stroke="#bdbdbd" stroke-width="1"/><path d="M6.5 8v4.5" stroke="#bdbdbd" stroke-width="1.8"/></svg>
<div class="a" style="left:416px;top:1013px;width:13px;height:13px;background:#262626"></div>
<svg class="a" style="left:416px;top:1013px" width="13" height="13"><path d="M1.5 11.5 L11.5 1.5" stroke="#bdbdbd" stroke-width="1.3"/></svg>
<div class="a" style="left:461px;top:1013px;width:13px;height:13px;background:#262626"></div>
<div class="a" style="left:476px;top:1013px;width:13px;height:13px;background:#262626"></div>
<div class="a" style="left:491px;top:1013px;width:13px;height:13px;background:#262626"></div>
<div class="a" style="left:2px;top:1021px;width:640px;height:1px;background:#000"></div>
<div class="a" style="left:2px;top:1022px;width:1916px;height:13px;background:#232323"></div>
<div class="a" style="left:1918px;top:691px;width:1px;height:344px;background:#2d8ceb"></div>
<div class="a" style="left:1901px;top:774px;width:17px;height:247px;background:#1d1d1d"></div>
<svg class="a" style="left:1903px;top:755px" width="14" height="16"><path d="M1.5 1h11v9l-5.5 5-5.5-5z" fill="#b4b4b4"/></svg>
<div class="a" style="left:1901px;top:773px;width:17px;height:1px;background:#111"></div>
<svg class="a" style="left:1901px;top:774px" width="17" height="16"><path d="M2.5 9 L8 2.5 V11z" fill="none" stroke="#bdbdbd" stroke-width="1"/><rect x="9" y="5" width="6" height="6" fill="#bdbdbd"/><circle cx="7.5" cy="10.5" r="2.5" fill="#232323" stroke="#bdbdbd" stroke-width="1"/></svg>
<div class="a" style="left:1902px;top:808px;width:14px;height:38px;background:#2c2c2c;border-radius:7px"></div>
<div class="a" style="left:637px;top:725px;width:1px;height:296px;background:#2d8ceb"></div>
<svg class="a" style="left:631px;top:738px" width="13" height="15"><path d="M.5 .5h12v6.5l-6 7-6-7z" fill="#2d8ceb"/><path d="M5 3.5h3M6.5 3.5v8" stroke="#0d2a50" stroke-width="1"/></svg>
<div class="a" style="left:5px;top:1022px;width:17px;height:13px;background:#1c1c1c"></div>
<svg class="a" style="left:0;top:1022px" width="700" height="13" fill="none">
 <g stroke="#2d8ceb" stroke-width="1"><rect x="8.5" y="3.5" width="6" height="6"/><rect x="10.5" y="5.5" width="6" height="6"/><rect x="12.5" y="7.5" width="6" height="6" fill="#1c1c1c"/></g>
 <g stroke="#bdbdbd" stroke-width="1"><circle cx="30" cy="6" r="4"/><rect x="31.5" y="6.5" width="5" height="6" fill="#232323"/></g>
 <path d="M47.5 1.5 h5 v3 l2.5 3 l-2.5 3 v3 h-5 v-3 l-2.5 -3 l2.5 -3z" fill="#8a8a8a"/><path d="M50 1.5v12" stroke="#aaa" stroke-width="1"/>
 <path d="M541 8 l3 -3 l2 2 l1.5 -1.5 l3 2.5z" fill="#bdbdbd"/>
 <circle cx="566" cy="7.5" r="3.8" stroke="#a8a8a8" stroke-width="1.6"/>
 <path d="M570 6.5h39" stroke="#3a3a3a" stroke-width="1.5"/>
 <path d="M621 12 l5 -5 l2 2 l4 -5 l6 8z" fill="#bdbdbd"/>
</svg>
<div class="a" style="left:384px;top:1022px;width:133px;height:14px;background:#1c1c1c;border:1px solid #2c2c2c;border-radius:2px"></div>
<div class="t" style="left:389px;top:1022px;color:#a8a8a8">Toggle Switches / Modes</div>
<!-- canvas -->
<div id="cv" class="a" style="left:499px;top:137px;width:1018px;height:507px;overflow:hidden;background:linear-gradient(#b5c9cd 0%,#a2bfd4 22%,#8db5d8 42%,#88b2d8 58%,#8db5d6 70%,#a3c0d0 85%,#b5c7cb 100%)">
<div class="a" style="left:69px;top:0;width:4px;height:507px;background:rgba(242,230,192,.88)"></div>
<div class="a" style="left:142px;top:0;width:4px;height:507px;background:rgba(242,230,192,.88)"></div>
<div class="a" style="left:215px;top:0;width:4px;height:507px;background:rgba(242,230,192,.88)"></div>
<div class="a" style="left:288px;top:0;width:4px;height:507px;background:rgba(242,230,192,.88)"></div>
<div class="a" style="left:361px;top:0;width:4px;height:507px;background:rgba(242,230,192,.88)"></div>
<div class="a" style="left:434px;top:0;width:4px;height:507px;background:rgba(242,230,192,.88)"></div>
<div class="a" style="left:507px;top:0;width:4px;height:507px;background:rgba(242,230,192,.88)"></div>
<div class="a" style="left:580px;top:0;width:4px;height:507px;background:rgba(242,230,192,.88)"></div>
<div class="a" style="left:653px;top:0;width:4px;height:507px;background:rgba(242,230,192,.88)"></div>
<div class="a" style="left:726px;top:0;width:4px;height:507px;background:rgba(242,230,192,.88)"></div>
<div class="a" style="left:799px;top:0;width:4px;height:507px;background:rgba(242,230,192,.88)"></div>
<div class="a" style="left:872px;top:0;width:4px;height:507px;background:rgba(242,230,192,.88)"></div>
<div class="a" style="left:945px;top:0;width:4px;height:507px;background:rgba(242,230,192,.88)"></div>
<div class="a" style="left:0;top:69px;width:1018px;height:4px;background:rgba(242,230,192,.88)"></div>
<div class="a" style="left:0;top:142px;width:1018px;height:4px;background:rgba(242,230,192,.88)"></div>
<div class="a" style="left:0;top:215px;width:1018px;height:4px;background:rgba(242,230,192,.88)"></div>
<div class="a" style="left:0;top:288px;width:1018px;height:4px;background:rgba(242,230,192,.88)"></div>
<div class="a" style="left:0;top:361px;width:1018px;height:4px;background:rgba(242,230,192,.88)"></div>
<div class="a" style="left:0;top:434px;width:1018px;height:4px;background:rgba(242,230,192,.88)"></div>
<div class="a" style="left:120px;top:184px;width:28px;height:140px;background:#3e3534"></div>
<div class="a" style="left:120px;top:184px;width:56px;height:28px;background:#3e3534"></div>
<div class="a" style="left:176px;top:212px;width:28px;height:28px;background:#3e3534"></div>
<div class="a" style="left:148px;top:240px;width:28px;height:28px;background:#3e3534"></div>
<div class="a" style="left:232px;top:296px;width:28px;height:28px;background:#3e3534;border:4px solid #ff4126"></div>
<div class="t" style="left:96px;top:90px;font-size:33px;line-height:36px;color:#3e3534">H</div>
<div class="t" style="left:168px;top:90px;font-size:33px;line-height:36px;color:#3e3534">O</div>
</div>
</body></html>
